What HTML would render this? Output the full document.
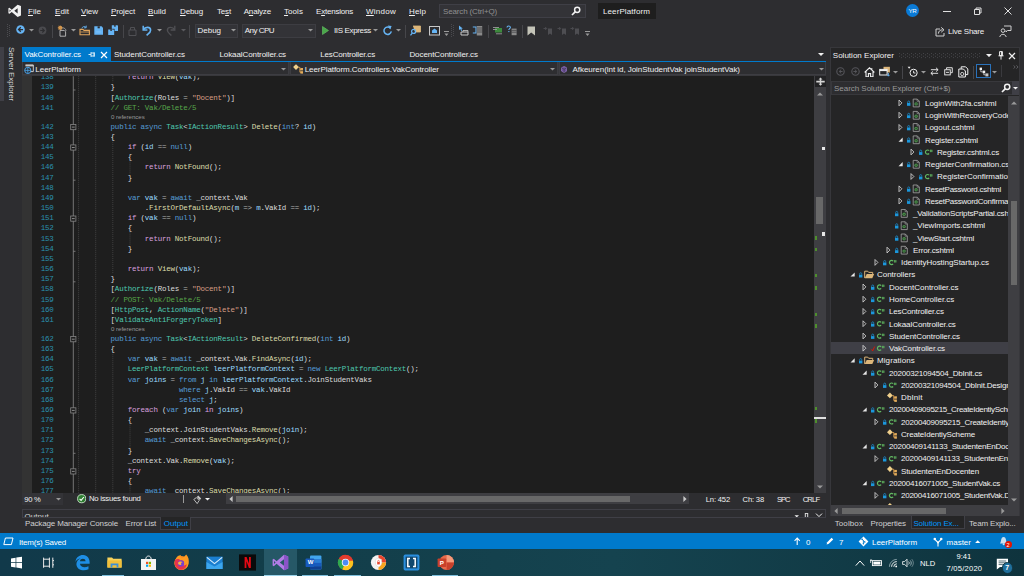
<!DOCTYPE html><html><head><meta charset="utf-8"><title>LeerPlatform - Microsoft Visual Studio</title><style>

html,body{margin:0;padding:0;background:#2d2d30;overflow:hidden}
#r{position:relative;width:1024px;height:576px;overflow:hidden;background:#2d2d30;font-family:"Liberation Sans",sans-serif}
#r div,#r span.t,#r svg,#r pre{position:absolute;display:block}
span.t{white-space:pre}
.s{font-family:"Liberation Sans",sans-serif}
.m{font-family:"Liberation Mono",monospace}


.cl{position:absolute;white-space:pre;font-family:"Liberation Mono",monospace;font-size:7.50px;letter-spacing:-0.220px;line-height:10.165px;height:10.165px;color:#dcdcdc;left:0;width:826px;overflow:hidden}
.cl i{font-style:normal}
.k{color:#569cd6}.c{color:#d8a0df}.ty{color:#4ec9b0}.me{color:#dcdcaa}.v{color:#9cdcfe}.st{color:#d69d85}.g{color:#57a64a}.o{color:#b4b4b4}
.ln{color:#2b91af}
.lens{position:absolute;white-space:pre;font-family:"Liberation Sans",sans-serif;font-size:6.1px;line-height:8.5px;color:#999999}

</style></head><body><div id="r">
<svg style="left:7.60px;top:4.40px;" width="13.6" height="13.6" viewBox="0 0 13 13"><path d="M9.2 0.6 L12.4 2 V11 L9.2 12.4 L3.6 7.6 L1.4 9.4 L0.4 8.9 V4.1 L1.4 3.6 L3.6 5.4 Z M9.2 4 L6 6.5 L9.2 9 Z M1.5 5.3 V7.7 L2.8 6.5 Z" fill="#f1f1f1" fill-rule="evenodd"/></svg>
<span class="t s" id="t0" style="left:28.00px;top:5.70px;font-size:8.0px;line-height:12px;color:#f1f1f1;letter-spacing:0.023px"><u>F</u>ile</span>
<span class="t s" id="t1" style="left:55.00px;top:5.70px;font-size:8.0px;line-height:12px;color:#f1f1f1;letter-spacing:0.051px"><u>E</u>dit</span>
<span class="t s" id="t2" style="left:81.00px;top:5.70px;font-size:8.0px;line-height:12px;color:#f1f1f1;letter-spacing:-0.055px"><u>V</u>iew</span>
<span class="t s" id="t3" style="left:111.00px;top:5.70px;font-size:8.0px;line-height:12px;color:#f1f1f1;letter-spacing:-0.129px"><u>P</u>roject</span>
<span class="t s" id="t4" style="left:148.00px;top:5.70px;font-size:8.0px;line-height:12px;color:#f1f1f1;letter-spacing:0.041px"><u>B</u>uild</span>
<span class="t s" id="t5" style="left:180.00px;top:5.70px;font-size:8.0px;line-height:12px;color:#f1f1f1;letter-spacing:-0.116px"><u>D</u>ebug</span>
<span class="t s" id="t6" style="left:217.00px;top:5.70px;font-size:8.0px;line-height:12px;color:#f1f1f1;letter-spacing:-0.172px">Te<u>s</u>t</span>
<span class="t s" id="t7" style="left:243.70px;top:5.70px;font-size:8.0px;line-height:12px;color:#f1f1f1;letter-spacing:-0.169px">A<u>n</u>alyze</span>
<span class="t s" id="t8" style="left:284.00px;top:5.70px;font-size:8.0px;line-height:12px;color:#f1f1f1;letter-spacing:0.062px"><u>T</u>ools</span>
<span class="t s" id="t9" style="left:316.00px;top:5.70px;font-size:8.0px;line-height:12px;color:#f1f1f1;letter-spacing:-0.214px">E<u>x</u>tensions</span>
<span class="t s" id="t10" style="left:366.00px;top:5.70px;font-size:8.0px;line-height:12px;color:#f1f1f1;letter-spacing:0.255px"><u>W</u>indow</span>
<span class="t s" id="t11" style="left:409.00px;top:5.70px;font-size:8.0px;line-height:12px;color:#f1f1f1;letter-spacing:0.133px"><u>H</u>elp</span>
<div style="left:439.00px;top:3.50px;width:147.00px;height:14.00px;background:#333337;box-sizing:border-box;border:1px solid #3f3f46"></div>
<span class="t s" id="t12" style="left:443.00px;top:5.60px;font-size:8.0px;line-height:12px;color:#8f8f8f;letter-spacing:-0.149px">Search (Ctrl+Q)</span>
<svg style="left:571.00px;top:6.00px;" width="10" height="10" viewBox="0 0 10 10"><circle cx="6.2" cy="3.8" r="2.6" fill="none" stroke="#f1f1f1" stroke-width="1.5"/><path d="M4.4 5.6 L1 9" stroke="#f1f1f1" stroke-width="1.7"/></svg>
<div style="left:598.00px;top:3.00px;width:58.00px;height:16.00px;background:#1e1e1e;"></div>
<span class="t s" id="t13" style="left:603.00px;top:5.50px;font-size:8.0px;line-height:12px;color:#f1f1f1;letter-spacing:0.100px">LeerPlatform</span>
<div style="left:906px;top:4px;width:13px;height:13px;border-radius:50%;background:#0a7ad6"></div>
<span class="t s" id="t14" style="left:908.40px;top:6.40px;font-size:6.2px;line-height:9px;color:#ffffff;letter-spacing:-0.205px">YR</span>
<div style="left:943.00px;top:11.00px;width:8.00px;height:1.00px;background:#e0e0e0;"></div>
<svg style="left:973.00px;top:6.00px;" width="10" height="10" viewBox="0 0 10 10"><path d="M1.5 3.5 H6.5 V8.5 H1.5 Z M3 3.5 V2 H8 V7 H6.5" fill="none" stroke="#e0e0e0" stroke-width="1"/></svg>
<svg style="left:1003.00px;top:6.00px;" width="10" height="10" viewBox="0 0 10 10"><path d="M1.5 1.5 L8.5 8.5 M8.5 1.5 L1.5 8.5" stroke="#e0e0e0" stroke-width="1"/></svg>
<svg style="left:7.40px;top:23.80px;" width="4" height="14" viewBox="0 0 4 14"><g fill="#4c4c50"><rect x="0" y="0" width="1" height="1"/><rect x="2" y="1" width="1" height="1"/><rect x="0" y="2" width="1" height="1"/><rect x="2" y="3" width="1" height="1"/><rect x="0" y="4" width="1" height="1"/><rect x="2" y="5" width="1" height="1"/><rect x="0" y="6" width="1" height="1"/><rect x="2" y="7" width="1" height="1"/><rect x="0" y="8" width="1" height="1"/><rect x="2" y="9" width="1" height="1"/><rect x="0" y="10" width="1" height="1"/><rect x="2" y="11" width="1" height="1"/><rect x="0" y="12" width="1" height="1"/></g></svg>
<svg style="left:15.70px;top:25.30px;" width="9" height="9" viewBox="0 0 9 9"><circle cx="4.5" cy="4.5" r="4.25" fill="#66b4f4"/><path d="M4.8 2.3 L2.5 4.5 L4.8 6.7 M2.7 4.5 H7" stroke="#2d2d30" stroke-width="1.25" fill="none"/></svg>
<svg style="left:28.70px;top:28.90px;" width="5.0" height="3.0" viewBox="0 0 5 3"><path d="M0 0 H5 L2.5 2.6 Z" fill="#999999"/></svg>
<svg style="left:37.70px;top:26.00px;" width="9" height="9" viewBox="0 0 9 9"><circle cx="4.5" cy="4.5" r="3.9" fill="#4a4a4e"/><path d="M4.3 2.5 L6.3 4.5 L4.3 6.5 M2.2 4.5 H6.1" stroke="#2d2d30" stroke-width="1.1" fill="none"/></svg>
<div style="left:52.30px;top:24.50px;width:1.00px;height:13.00px;background:#46464a;"></div>
<svg style="left:57.00px;top:24.50px;" width="11" height="12" viewBox="0 0 11 12"><path d="M4.6 3 C7 2.4 8.8 3.6 9 6" fill="none" stroke="#a8a8a8" stroke-width=".9"/><path d="M3 5.4 H7.2 L8.6 6.8 V11.2 H3 Z" fill="#2d2d30" stroke="#bdbdbd" stroke-width=".9"/><circle cx="3.2" cy="2.8" r="1.9" fill="#e0a050"/><circle cx="3.2" cy="2.8" r=".7" fill="#2d2d30"/><path d="M3.2 0.3 V5.3 M0.7 2.8 H5.7 M1.4 1 L5 4.6 M5 1 L1.4 4.6" stroke="#e0a050" stroke-width=".6"/></svg>
<svg style="left:70.90px;top:28.90px;" width="5.0" height="3.0" viewBox="0 0 5 3"><path d="M0 0 H5 L2.5 2.6 Z" fill="#999999"/></svg>
<svg style="left:78.50px;top:25.00px;" width="12" height="11" viewBox="0 0 12 11"><path d="M1 9.8 V4.4 H4 L5 5.4 H10.4 V9.8 Z" fill="#2d2d30" stroke="#e2a65c" stroke-width="1.1"/><path d="M1.4 7 H10" stroke="#e2a65c" stroke-width=".8"/><path d="M2.8 3.4 C3.4 1.4 5.8 1 7 2.4 M7.2 0.6 V2.8 H5" fill="none" stroke="#66b4f4" stroke-width=".9"/></svg>
<svg style="left:94.00px;top:25.80px;" width="9.4" height="9" viewBox="0 0 9.4 9"><path d="M0.3 0.3 H7.6 L9.1 1.8 V8.7 H0.3 Z" fill="#66b4f4"/><rect x="3.6" y="0.3" width="2.2" height="2" fill="#2d2d30"/><rect x="2.2" y="5.6" width="5" height="0.7" fill="#8cc8f8"/></svg>
<svg style="left:108.00px;top:25.00px;" width="10.4" height="10.4" viewBox="0 0 10.4 10.4"><path d="M3.8 0.2 H9.4 L10.2 1 V6 H3.8 Z" fill="#66b4f4"/><rect x="6" y="0.2" width="1.8" height="1.4" fill="#2d2d30"/><path d="M-0.2 3.8 H6.6 V10.6 H-0.2 Z" fill="#2d2d30"/><path d="M0.2 4.4 H5.4 L6.2 5.2 V10.2 H0.2 Z" fill="#66b4f4"/><rect x="2.2" y="4.4" width="1.8" height="1.4" fill="#2d2d30"/></svg>
<div style="left:123.10px;top:24.50px;width:1.00px;height:13.00px;background:#46464a;"></div>
<svg style="left:128.00px;top:26.00px;" width="9" height="10" viewBox="0 0 9 10"><path d="M1 4 H8 V9.5 H1 Z M2.5 4 V1.5 H6.5 V4" fill="none" stroke="#505054" stroke-width="1"/></svg>
<svg style="left:142.00px;top:25.00px;" width="10" height="11" viewBox="0 0 10 11"><path d="M1.2 0.8 V5 H5.4" fill="none" stroke="#66b4f4" stroke-width="1.5"/><path d="M1.5 4.6 C3 1.6 8.6 1.4 8.6 5.2 C8.6 7.6 6.5 8.6 4.6 10.4" fill="none" stroke="#66b4f4" stroke-width="1.6"/></svg>
<svg style="left:157.00px;top:29.20px;" width="5.0" height="3.0" viewBox="0 0 5 3"><path d="M0 0 H5 L2.5 2.6 Z" fill="#999999"/></svg>
<svg style="left:166.00px;top:25.00px;" width="10" height="11" viewBox="0 0 10 11"><path d="M8.8 0.8 V5 H4.6" fill="none" stroke="#505054" stroke-width="1.3"/><path d="M8.5 4.6 C7 1.6 1.4 1.4 1.4 5.2 C1.4 7.6 3.5 8.6 5.4 10.4" fill="none" stroke="#505054" stroke-width="1.4"/></svg>
<svg style="left:181.00px;top:29.20px;" width="5.0" height="3.0" viewBox="0 0 5 3"><path d="M0 0 H5 L2.5 2.6 Z" fill="#5a5a5e"/></svg>
<div style="left:189.00px;top:24.50px;width:1.00px;height:13.00px;background:#46464a;"></div>
<div style="left:195.00px;top:24.00px;width:43.00px;height:13.50px;background:#333337;box-sizing:border-box;border:1px solid #3d3d42"></div>
<span class="t s" id="t15" style="left:197.50px;top:24.60px;font-size:8.0px;line-height:12px;color:#f1f1f1;letter-spacing:-0.016px">Debug</span>
<svg style="left:230.50px;top:29.20px;" width="5.0" height="3.0" viewBox="0 0 5 3"><path d="M0 0 H5 L2.5 2.6 Z" fill="#999999"/></svg>
<div style="left:242.00px;top:24.00px;width:74.00px;height:13.50px;background:#333337;box-sizing:border-box;border:1px solid #3d3d42"></div>
<span class="t s" id="t16" style="left:244.70px;top:24.60px;font-size:8.0px;line-height:12px;color:#f1f1f1;letter-spacing:-0.515px">Any CPU</span>
<svg style="left:308.00px;top:29.20px;" width="5.0" height="3.0" viewBox="0 0 5 3"><path d="M0 0 H5 L2.5 2.6 Z" fill="#999999"/></svg>
<svg style="left:321.50px;top:26.00px;" width="7" height="9" viewBox="0 0 7 9"><path d="M0.5 0.5 L6.5 4.5 L0.5 8.5 Z" fill="#4aa84a" stroke="#66c266" stroke-width=".6"/></svg>
<span class="t s" id="t17" style="left:334.00px;top:24.60px;font-size:8.0px;line-height:12px;color:#f1f1f1;letter-spacing:-0.355px">IIS Express</span>
<svg style="left:373.00px;top:29.20px;" width="5.0" height="3.0" viewBox="0 0 5 3"><path d="M0 0 H5 L2.5 2.6 Z" fill="#999999"/></svg>
<svg style="left:382.00px;top:25.00px;" width="11" height="11" viewBox="0 0 11 11"><path d="M8.6 3.4 A3.7 3.7 0 1 0 9.3 6.4" fill="none" stroke="#66b4f4" stroke-width="1.5"/><path d="M5.8 0.4 L9.6 1 L8.2 4.4 Z" fill="#66b4f4"/></svg>
<svg style="left:395.50px;top:29.20px;" width="5.0" height="3.0" viewBox="0 0 5 3"><path d="M0 0 H5 L2.5 2.6 Z" fill="#999999"/></svg>
<div style="left:405.00px;top:24.50px;width:1.00px;height:13.00px;background:#46464a;"></div>
<svg style="left:409.50px;top:25.00px;" width="11" height="11" viewBox="0 0 11 11"><path d="M3 1 H10.5 V7 H5" fill="#dcb67a"/><path d="M3 1 H10.5 V7 H5.5" fill="none" stroke="#dcb67a" stroke-width=".8"/><circle cx="3.6" cy="6.4" r="2" fill="none" stroke="#66b4f4" stroke-width="1.2"/><path d="M2.4 7.8 L0.5 10.4" stroke="#66b4f4" stroke-width="1.3"/></svg>
<svg style="left:428.50px;top:25.50px;" width="11" height="10" viewBox="0 0 11 10"><rect x="0.5" y="0.5" width="10" height="8.5" fill="none" stroke="#c8c8c8" stroke-width="1"/><path d="M3 7 V4.6 L5.5 2.6 L8 4.6 V7 Z" fill="#66b4f4"/></svg>
<svg style="left:443.50px;top:31.00px;" width="5" height="6" viewBox="0 0 5 6"><rect x="0" y="0" width="5" height="1" fill="#999"/><path d="M0.5 2.5 H4.5 L2.5 5 Z" fill="#999"/></svg>
<svg style="left:451.00px;top:24.00px;" width="4" height="14" viewBox="0 0 4 14"><g fill="#4a4a4e"><rect x="0" y="0" width="1" height="1"/><rect x="2" y="1" width="1" height="1"/><rect x="0" y="2" width="1" height="1"/><rect x="2" y="3" width="1" height="1"/><rect x="0" y="4" width="1" height="1"/><rect x="2" y="5" width="1" height="1"/><rect x="0" y="6" width="1" height="1"/><rect x="2" y="7" width="1" height="1"/><rect x="0" y="8" width="1" height="1"/><rect x="2" y="9" width="1" height="1"/><rect x="0" y="10" width="1" height="1"/><rect x="2" y="11" width="1" height="1"/><rect x="0" y="12" width="1" height="1"/></g></svg>
<svg style="left:457.50px;top:25.00px;" width="11" height="11" viewBox="0 0 11 11"><path d="M1 0.5 L1 5 L2.3 4 L3.2 6 L4.2 5.5 L3.3 3.7 L4.8 3.5 Z" fill="#66b4f4"/><path d="M3 7 H10 V10 H3 Z" fill="none" stroke="#c8c8c8" stroke-width="1"/><path d="M5 7 V5.5 H10 V7" fill="none" stroke="#c8c8c8" stroke-width=".8"/></svg>
<svg style="left:471.50px;top:25.00px;" width="11" height="11" viewBox="0 0 11 11"><path d="M0.8 2 H4 V8 H0.8" fill="none" stroke="#66b4f4" stroke-width="1.1"/><rect x="4.8" y="1" width="5.4" height="9.5" fill="#8a8a8a"/><path d="M4.8 3 H10.2 M4.8 5 H10.2 M4.8 7 H10.2" stroke="#2d2d30" stroke-width=".6"/></svg>
<div style="left:488.00px;top:24.50px;width:1.00px;height:13.00px;background:#46464a;"></div>
<svg style="left:492.50px;top:26.50px;" width="10" height="8" viewBox="0 0 10 8"><rect x="2" y="1" width="7" height="4.5" fill="#3d8a3d"/><path d="M0 0.5 H6 M0 2.5 H4 M3 6.8 H9" stroke="#9a9a9a" stroke-width=".9"/></svg>
<svg style="left:506.00px;top:25.00px;" width="11" height="11" viewBox="0 0 11 11"><path d="M1 2.6 C1 0.6 4.4 0.6 4.4 2.4 C4.4 3.6 2.8 3.6 2.8 5" fill="none" stroke="#66b4f4" stroke-width="1.1"/><rect x="2.3" y="6" width="1.1" height="1.1" fill="#66b4f4"/><rect x="5.6" y="3.6" width="5" height="6.6" fill="#8a8a8a"/><path d="M5.6 5.4 H10.6 M5.6 7.2 H10.6" stroke="#2d2d30" stroke-width=".6"/></svg>
<div style="left:522.00px;top:24.50px;width:1.00px;height:13.00px;background:#46464a;"></div>
<svg style="left:527.00px;top:25.50px;" width="9" height="10" viewBox="0 0 9 10"><path d="M0.5 0.5 H8 V9.5 L4.2 6.6 L0.5 9.5 Z" fill="#c4c4b8"/></svg>
<svg style="left:543.00px;top:25.50px;" width="10" height="10" viewBox="0 0 10 10"><path d="M5 2.5 H9 V9 L7 7.6 L5 9 Z" fill="#4e4e52"/><path d="M0.5 2.5 H3.5 M2.2 1 L3.7 2.5 L2.2 4" stroke="#4e4e52" stroke-width=".9" fill="none"/></svg>
<svg style="left:556.50px;top:25.50px;" width="10" height="10" viewBox="0 0 10 10"><path d="M5 2.5 H9 V9 L7 7.6 L5 9 Z" fill="#4e4e52"/><path d="M0.5 2.5 H3.5 M2.2 1 L3.7 2.5 L2.2 4" stroke="#4e4e52" stroke-width=".9" fill="none"/></svg>
<svg style="left:570.00px;top:25.50px;" width="10" height="10" viewBox="0 0 10 10"><path d="M5 2.5 H9 V9 L7 7.6 L5 9 Z" fill="#4e4e52"/><path d="M0.5 2.5 H3.5 M2.2 1 L3.7 2.5 L2.2 4" stroke="#4e4e52" stroke-width=".9" fill="none"/></svg>
<svg style="left:584.50px;top:31.00px;" width="5" height="6" viewBox="0 0 5 6"><rect x="0" y="0" width="5" height="1" fill="#999"/><path d="M0.5 2.5 H4.5 L2.5 5 Z" fill="#999"/></svg>
<svg style="left:934.50px;top:26.00px;" width="11" height="11" viewBox="0 0 11 11"><path d="M5 3 H1 V10 H9 V7" fill="none" stroke="#d0d0d0" stroke-width="1"/><path d="M3.4 7.6 C3.6 5 5.2 3.8 7.6 3.8 M6.2 1.4 L9 3.8 L6.2 6.2" fill="none" stroke="#d0d0d0" stroke-width="1"/></svg>
<span class="t s" id="t18" style="left:948.00px;top:26.20px;font-size:8.0px;line-height:12px;color:#f1f1f1;letter-spacing:-0.225px">Live Share</span>
<svg style="left:998.50px;top:24.50px;" width="13" height="13" viewBox="0 0 13 13"><path d="M5 1 H12 V5.5 H8.5 L7 7 V5.5" fill="none" stroke="#d0d0d0" stroke-width="1"/><circle cx="4" cy="5.6" r="1.8" fill="none" stroke="#d0d0d0" stroke-width="1"/><path d="M0.8 12 C1.4 8.4 6.4 8.4 7.2 12" fill="none" stroke="#d0d0d0" stroke-width="1"/></svg>
<div style="left:0.00px;top:46.80px;width:4.20px;height:54.00px;background:#3f3f46;"></div>
<span class="t s" style="left:15.8px;top:46.6px;font-size:8px;line-height:10px;color:#d0d0d0;transform-origin:0 0;transform:rotate(90deg);letter-spacing:-0.1px">Server Explorer</span>
<div style="left:22.00px;top:46.80px;width:89.20px;height:14.50px;background:#007acc;"></div>
<div style="left:22.00px;top:60.60px;width:804.00px;height:1.50px;background:#007acc;"></div>
<span class="t s" id="t19" style="left:24.50px;top:49.40px;font-size:8.0px;line-height:12px;color:#ffffff;letter-spacing:-0.072px">VakController.cs</span>
<svg style="left:87.50px;top:51.00px;" width="8" height="7" viewBox="0 0 8 7"><path d="M0.5 3.5 H3 M3 1.2 V5.8 M3 2 H6.2 V5 H3 M6.2 1.2 V5.8" fill="none" stroke="#d6ebf8" stroke-width="1"/></svg>
<svg style="left:100.00px;top:50.50px;" width="8" height="8" viewBox="0 0 8 8"><path d="M1 1 L7 7 M7 1 L1 7" stroke="#ffffff" stroke-width="1.2"/></svg>
<span class="t s" id="t20" style="left:114.00px;top:49.40px;font-size:8.0px;line-height:12px;color:#f1f1f1;letter-spacing:-0.052px">StudentController.cs</span>
<span class="t s" id="t21" style="left:219.40px;top:49.40px;font-size:8.0px;line-height:12px;color:#f1f1f1;letter-spacing:-0.076px">LokaalController.cs</span>
<span class="t s" id="t22" style="left:320.30px;top:49.40px;font-size:8.0px;line-height:12px;color:#f1f1f1;letter-spacing:-0.166px">LesController.cs</span>
<span class="t s" id="t23" style="left:409.40px;top:49.40px;font-size:8.0px;line-height:12px;color:#f1f1f1;letter-spacing:-0.064px">DocentController.cs</span>
<svg style="left:818.00px;top:53.44px;" width="6.0" height="3.5999999999999996" viewBox="0 0 5 3"><path d="M0 0 H5 L2.5 2.6 Z" fill="#f1f1f1"/></svg>
<div style="left:22.00px;top:62.10px;width:804.00px;height:14.10px;background:#38383c;"></div>
<div style="left:22.30px;top:62.10px;width:267.00px;height:13.30px;background:#2e2e31;box-sizing:border-box;border:1px solid #3d3d42;border-top:none"></div>
<div style="left:290.00px;top:62.10px;width:268.30px;height:13.30px;background:#2e2e31;box-sizing:border-box;border:1px solid #3d3d42;border-top:none"></div>
<div style="left:559.00px;top:62.10px;width:266.70px;height:13.30px;background:#2e2e31;box-sizing:border-box;border:1px solid #3d3d42;border-top:none"></div>
<svg style="left:24.00px;top:64.00px;" width="10" height="10" viewBox="0 0 10 10"><path d="M1.5 1 H9.3 V7.6 H6.8" fill="none" stroke="#c8c8c8" stroke-width="1"/><path d="M1.5 1.6 H9.3" stroke="#c8c8c8" stroke-width="1.6"/><circle cx="3.8" cy="6.4" r="3.1" fill="#2d2d30" stroke="#4aa3e8" stroke-width="1"/><path d="M0.8 6.4 H6.8 M3.8 3.4 V9.4" stroke="#4aa3e8" stroke-width=".8"/></svg>
<span class="t s" id="t24" style="left:35.30px;top:64.10px;font-size:8.0px;line-height:12px;color:#f1f1f1;letter-spacing:-0.008px">LeerPlatform</span>
<svg style="left:281.00px;top:68.00px;" width="5.0" height="3.0" viewBox="0 0 5 3"><path d="M0 0 H5 L2.5 2.6 Z" fill="#999999"/></svg>
<svg style="left:293.20px;top:64.20px;" width="11" height="11" viewBox="0 0 11 11"><path d="M3 0.2 L5.9 3.1 L3 6 L0.1 3.1 Z" fill="#f0d08c"/><path d="M5.4 3.4 H6.9 V8.2 H8 M6.9 5.4 H8" fill="none" stroke="#dca04e" stroke-width=".9"/><rect x="7.4" y="4" width="2.6" height="2.4" fill="#e4ac5a"/><rect x="7.4" y="7.2" width="2.6" height="2.4" fill="#e4ac5a"/></svg>
<span class="t s" id="t25" style="left:304.70px;top:64.10px;font-size:8.0px;line-height:12px;color:#f1f1f1;letter-spacing:-0.066px">LeerPlatform.Controllers.VakController</span>
<svg style="left:549.50px;top:68.00px;" width="5.0" height="3.0" viewBox="0 0 5 3"><path d="M0 0 H5 L2.5 2.6 Z" fill="#999999"/></svg>
<svg style="left:561.20px;top:65.60px;" width="6.2" height="7" viewBox="0 0 7 8"><path d="M3.5 0.5 L6.5 2 V5.8 L3.5 7.5 L0.5 5.8 V2 Z" fill="#6f539c" stroke="#a07fd0" stroke-width=".7"/><path d="M0.8 2.2 L3.5 3.6 L6.2 2.2 M3.5 3.6 V7.2" stroke="#2d2d30" stroke-width=".6" fill="none"/></svg>
<span class="t s" id="t26" style="left:572.50px;top:64.10px;font-size:8.0px;line-height:12px;color:#f1f1f1;letter-spacing:-0.045px">Afkeuren(int id, JoinStudentVak joinStudentVak)</span>
<svg style="left:818.50px;top:68.00px;" width="5.0" height="3.0" viewBox="0 0 5 3"><path d="M0 0 H5 L2.5 2.6 Z" fill="#999999"/></svg>
<div style="left:22.00px;top:76.20px;width:804.00px;height:416.60px;background:#1e1e1e;"></div>
<div style="left:22.00px;top:76.20px;width:10.00px;height:416.60px;background:#333333;"></div>
<div style="left:0;top:76.2px;width:826px;height:416.6px;overflow:hidden"><span class="cl" style="top:-3.90px"><i class="ln" style="position:absolute;left:40.7px">138</i><i style="position:absolute;left:127.71px"><i class="c">return</i> <i class="me">View</i>(<i class="v">vak</i>);</i></span><span class="cl" style="top:6.27px"><i class="ln" style="position:absolute;left:40.7px">139</i><i style="position:absolute;left:110.59px">}</i></span><span class="cl" style="top:16.43px"><i class="ln" style="position:absolute;left:40.7px">140</i><i style="position:absolute;left:110.59px">[<i class="ty">Authorize</i>(Roles <i class="o">=</i> <i class="st">&quot;Docent&quot;</i>)]</i></span><span class="cl" style="top:26.59px"><i class="ln" style="position:absolute;left:40.7px">141</i><i style="position:absolute;left:110.59px"><i class="g">// GET: Vak/Delete/5</i></i></span><span class="lens" style="left:110.89px;top:36.76px">0 references</span><span class="cl" style="top:45.56px"><i class="ln" style="position:absolute;left:40.7px">142</i><i style="position:absolute;left:110.59px"><i class="k">public</i> <i class="k">async</i> <i class="ty">Task</i>&lt;<i class="ty">IActionResult</i>&gt; <i class="me">Delete</i>(<i class="k">int</i>? <i class="v">id</i>)</i></span><span class="cl" style="top:55.72px"><i class="ln" style="position:absolute;left:40.7px">143</i><i style="position:absolute;left:110.59px">{</i></span><span class="cl" style="top:65.89px"><i class="ln" style="position:absolute;left:40.7px">144</i><i style="position:absolute;left:127.71px"><i class="c">if</i> (<i class="v">id</i> <i class="o">==</i> <i class="k">null</i>)</i></span><span class="cl" style="top:76.05px"><i class="ln" style="position:absolute;left:40.7px">145</i><i style="position:absolute;left:127.71px">{</i></span><span class="cl" style="top:86.22px"><i class="ln" style="position:absolute;left:40.7px">146</i><i style="position:absolute;left:144.83px"><i class="c">return</i> <i class="me">NotFound</i>();</i></span><span class="cl" style="top:96.38px"><i class="ln" style="position:absolute;left:40.7px">147</i><i style="position:absolute;left:127.71px">}</i></span><span class="cl" style="top:106.55px"><i class="ln" style="position:absolute;left:40.7px">148</i><i style="position:absolute;left:76.35px"></i></span><span class="cl" style="top:116.71px"><i class="ln" style="position:absolute;left:40.7px">149</i><i style="position:absolute;left:127.71px"><i class="k">var</i> <i class="v">vak</i> <i class="o">=</i> <i class="k">await</i> _context.Vak</i></span><span class="cl" style="top:126.88px"><i class="ln" style="position:absolute;left:40.7px">150</i><i style="position:absolute;left:144.83px">.<i class="me">FirstOrDefaultAsync</i>(<i class="v">m</i> <i class="o">=&gt;</i> <i class="v">m</i>.VakId <i class="o">==</i> <i class="v">id</i>);</i></span><span class="cl" style="top:137.04px"><i class="ln" style="position:absolute;left:40.7px">151</i><i style="position:absolute;left:127.71px"><i class="c">if</i> (<i class="v">vak</i> <i class="o">==</i> <i class="k">null</i>)</i></span><span class="cl" style="top:147.21px"><i class="ln" style="position:absolute;left:40.7px">152</i><i style="position:absolute;left:127.71px">{</i></span><span class="cl" style="top:157.37px"><i class="ln" style="position:absolute;left:40.7px">153</i><i style="position:absolute;left:144.83px"><i class="c">return</i> <i class="me">NotFound</i>();</i></span><span class="cl" style="top:167.54px"><i class="ln" style="position:absolute;left:40.7px">154</i><i style="position:absolute;left:127.71px">}</i></span><span class="cl" style="top:177.70px"><i class="ln" style="position:absolute;left:40.7px">155</i><i style="position:absolute;left:76.35px"></i></span><span class="cl" style="top:187.87px"><i class="ln" style="position:absolute;left:40.7px">156</i><i style="position:absolute;left:127.71px"><i class="c">return</i> <i class="me">View</i>(<i class="v">vak</i>);</i></span><span class="cl" style="top:198.03px"><i class="ln" style="position:absolute;left:40.7px">157</i><i style="position:absolute;left:110.59px">}</i></span><span class="cl" style="top:208.20px"><i class="ln" style="position:absolute;left:40.7px">158</i><i style="position:absolute;left:110.59px">[<i class="ty">Authorize</i>(Roles <i class="o">=</i> <i class="st">&quot;Docent&quot;</i>)]</i></span><span class="cl" style="top:218.36px"><i class="ln" style="position:absolute;left:40.7px">159</i><i style="position:absolute;left:110.59px"><i class="g">// POST: Vak/Delete/5</i></i></span><span class="cl" style="top:228.53px"><i class="ln" style="position:absolute;left:40.7px">160</i><i style="position:absolute;left:110.59px">[<i class="ty">HttpPost</i>, <i class="ty">ActionName</i>(<i class="st">&quot;Delete&quot;</i>)]</i></span><span class="cl" style="top:238.69px"><i class="ln" style="position:absolute;left:40.7px">161</i><i style="position:absolute;left:110.59px">[<i class="ty">ValidateAntiForgeryToken</i>]</i></span><span class="lens" style="left:110.89px;top:248.86px">0 references</span><span class="cl" style="top:257.66px"><i class="ln" style="position:absolute;left:40.7px">162</i><i style="position:absolute;left:110.59px"><i class="k">public</i> <i class="k">async</i> <i class="ty">Task</i>&lt;<i class="ty">IActionResult</i>&gt; <i class="me">DeleteConfirmed</i>(<i class="k">int</i> <i class="v">id</i>)</i></span><span class="cl" style="top:267.83px"><i class="ln" style="position:absolute;left:40.7px">163</i><i style="position:absolute;left:110.59px">{</i></span><span class="cl" style="top:277.99px"><i class="ln" style="position:absolute;left:40.7px">164</i><i style="position:absolute;left:127.71px"><i class="k">var</i> <i class="v">vak</i> <i class="o">=</i> <i class="k">await</i> _context.Vak.<i class="me">FindAsync</i>(<i class="v">id</i>);</i></span><span class="cl" style="top:288.16px"><i class="ln" style="position:absolute;left:40.7px">165</i><i style="position:absolute;left:127.71px"><i class="ty">LeerPlatformContext</i> <i class="v">leerPlatformContext</i> <i class="o">=</i> <i class="k">new</i> <i class="ty">LeerPlatformContext</i>();</i></span><span class="cl" style="top:298.32px"><i class="ln" style="position:absolute;left:40.7px">166</i><i style="position:absolute;left:127.71px"><i class="k">var</i> <i class="v">joins</i> <i class="o">=</i> <i class="k">from</i> <i class="v">j</i> <i class="k">in</i> <i class="v">leerPlatformContext</i>.JoinStudentVaks</i></span><span class="cl" style="top:308.49px"><i class="ln" style="position:absolute;left:40.7px">167</i><i style="position:absolute;left:179.07px"><i class="k">where</i> <i class="v">j</i>.VakId <i class="o">==</i> <i class="v">vak</i>.VakId</i></span><span class="cl" style="top:318.65px"><i class="ln" style="position:absolute;left:40.7px">168</i><i style="position:absolute;left:179.07px"><i class="k">select</i> <i class="v">j</i>;</i></span><span class="cl" style="top:328.82px"><i class="ln" style="position:absolute;left:40.7px">169</i><i style="position:absolute;left:127.71px"><i class="c">foreach</i> (<i class="k">var</i> <i class="v">join</i> <i class="c">in</i> <i class="v">joins</i>)</i></span><span class="cl" style="top:338.98px"><i class="ln" style="position:absolute;left:40.7px">170</i><i style="position:absolute;left:127.71px">{</i></span><span class="cl" style="top:349.15px"><i class="ln" style="position:absolute;left:40.7px">171</i><i style="position:absolute;left:144.83px">_context.JoinStudentVaks.<i class="me">Remove</i>(<i class="v">join</i>);</i></span><span class="cl" style="top:359.31px"><i class="ln" style="position:absolute;left:40.7px">172</i><i style="position:absolute;left:144.83px"><i class="k">await</i> _context.<i class="me">SaveChangesAsync</i>();</i></span><span class="cl" style="top:369.48px"><i class="ln" style="position:absolute;left:40.7px">173</i><i style="position:absolute;left:127.71px">}</i></span><span class="cl" style="top:379.64px"><i class="ln" style="position:absolute;left:40.7px">174</i><i style="position:absolute;left:127.71px">_context.Vak.<i class="me">Remove</i>(<i class="v">vak</i>);</i></span><span class="cl" style="top:389.81px"><i class="ln" style="position:absolute;left:40.7px">175</i><i style="position:absolute;left:127.71px"><i class="c">try</i></i></span><span class="cl" style="top:399.97px"><i class="ln" style="position:absolute;left:40.7px">176</i><i style="position:absolute;left:127.71px">{</i></span><span class="cl" style="top:410.14px"><i class="ln" style="position:absolute;left:40.7px">177</i><i style="position:absolute;left:144.83px"><i class="k">await</i> _context.<i class="me">SaveChangesAsync</i>();</i></span></div>
<svg style="left:0;top:0" width="826" height="492.8" viewBox="0 0 826 492.8"><line x1="78.6" y1="76.2" x2="78.6" y2="492.8" stroke="#5a5a5a" stroke-width="0.6" stroke-dasharray="1 1"/><line x1="95.7" y1="76.2" x2="95.7" y2="492.8" stroke="#5a5a5a" stroke-width="0.6" stroke-dasharray="1 1"/><line x1="112.8" y1="76.2" x2="112.8" y2="82.5" stroke="#5a5a5a" stroke-width="0.6" stroke-dasharray="1 1"/><line x1="112.8" y1="142.1" x2="112.8" y2="274.2" stroke="#5a5a5a" stroke-width="0.6" stroke-dasharray="1 1"/><line x1="112.8" y1="354.2" x2="112.8" y2="492.8" stroke="#5a5a5a" stroke-width="0.6" stroke-dasharray="1 1"/><line x1="130.0" y1="160.4" x2="130.0" y2="174.6" stroke="#5a5a5a" stroke-width="0.6" stroke-dasharray="1 1"/><line x1="130.0" y1="231.6" x2="130.0" y2="245.7" stroke="#5a5a5a" stroke-width="0.6" stroke-dasharray="1 1"/><line x1="130.0" y1="423.3" x2="130.0" y2="447.7" stroke="#5a5a5a" stroke-width="0.6" stroke-dasharray="1 1"/><line x1="130.0" y1="484.3" x2="130.0" y2="492.8" stroke="#5a5a5a" stroke-width="0.6" stroke-dasharray="1 1"/><line x1="73.3" y1="76.2" x2="73.3" y2="492.8" stroke="#8a8a8a" stroke-width="0.8"/><line x1="73.3" y1="90.0" x2="75.5" y2="90.0" stroke="#8a8a8a" stroke-width="0.8"/><line x1="73.3" y1="180.2" x2="75.5" y2="180.2" stroke="#8a8a8a" stroke-width="0.8"/><line x1="73.3" y1="251.3" x2="75.5" y2="251.3" stroke="#8a8a8a" stroke-width="0.8"/><line x1="73.3" y1="281.8" x2="75.5" y2="281.8" stroke="#8a8a8a" stroke-width="0.8"/><line x1="73.3" y1="453.3" x2="75.5" y2="453.3" stroke="#8a8a8a" stroke-width="0.8"/><rect x="70.7" y="124.5" width="5.2" height="5.2" fill="#1e1e1e" stroke="#868686" stroke-width="0.8"/><line x1="71.9" y1="127.1" x2="74.7" y2="127.1" stroke="#a8a8a8" stroke-width="0.8"/><rect x="70.7" y="144.9" width="5.2" height="5.2" fill="#1e1e1e" stroke="#868686" stroke-width="0.8"/><line x1="71.9" y1="147.5" x2="74.7" y2="147.5" stroke="#a8a8a8" stroke-width="0.8"/><rect x="70.7" y="216.0" width="5.2" height="5.2" fill="#1e1e1e" stroke="#868686" stroke-width="0.8"/><line x1="71.9" y1="218.6" x2="74.7" y2="218.6" stroke="#a8a8a8" stroke-width="0.8"/><rect x="70.7" y="336.6" width="5.2" height="5.2" fill="#1e1e1e" stroke="#868686" stroke-width="0.8"/><line x1="71.9" y1="339.2" x2="74.7" y2="339.2" stroke="#a8a8a8" stroke-width="0.8"/><rect x="70.7" y="407.8" width="5.2" height="5.2" fill="#1e1e1e" stroke="#868686" stroke-width="0.8"/><line x1="71.9" y1="410.4" x2="74.7" y2="410.4" stroke="#a8a8a8" stroke-width="0.8"/><rect x="70.7" y="468.8" width="5.2" height="5.2" fill="#1e1e1e" stroke="#868686" stroke-width="0.8"/><line x1="71.9" y1="471.4" x2="74.7" y2="471.4" stroke="#a8a8a8" stroke-width="0.8"/></svg>
<div style="left:813.60px;top:76.20px;width:12.40px;height:416.60px;background:#3e3e42;"></div>
<div style="left:813.60px;top:76.20px;width:12.40px;height:12.50px;background:#3e3e42;"></div>
<div style="left:814.60px;top:76.20px;width:11.40px;height:10.80px;background:#222224;"></div>
<svg style="left:815.90px;top:77.00px;" width="9" height="9.4" viewBox="0 0 10 10"><path d="M5 0.3 L7.2 2.6 H5.8 V4 H9.7 V5.8 H5.8 V7.2 H7.2 L5 9.6 L2.8 7.2 H4.2 V5.8 H0.3 V4 H4.2 V2.6 H2.8 Z" fill="#d4d4d4"/></svg>
<svg style="left:817.30px;top:91.50px;" width="6" height="4" viewBox="0 0 6 4"><path d="M0 3.6 L3 0.4 L6 3.6 Z" fill="#999999"/></svg>
<svg style="left:817.30px;top:485.00px;" width="6" height="4" viewBox="0 0 6 4"><path d="M0 0.4 L3 3.6 L6 0.4 Z" fill="#999999"/></svg>
<div style="left:815.80px;top:196.50px;width:7.20px;height:27.30px;background:#686868;"></div>
<div style="left:822.00px;top:146.50px;width:3.40px;height:3.60px;background:#e8e8e8;"></div>
<div style="left:822.00px;top:232.00px;width:3.40px;height:3.60px;background:#e8e8e8;"></div>
<div style="left:814.60px;top:236.00px;width:2.80px;height:3.60px;background:#4e8f2c;"></div>
<div style="left:814.60px;top:247.50px;width:2.80px;height:3.60px;background:#4e8f2c;"></div>
<div style="left:814.60px;top:273.50px;width:2.80px;height:3.60px;background:#4e8f2c;"></div>
<div style="left:814.60px;top:286.00px;width:2.80px;height:3.60px;background:#4e8f2c;"></div>
<div style="left:814.60px;top:312.50px;width:2.80px;height:3.60px;background:#4e8f2c;"></div>
<div style="left:814.60px;top:324.00px;width:2.80px;height:3.60px;background:#4e8f2c;"></div>
<div style="left:814.60px;top:406.50px;width:2.80px;height:3.60px;background:#4e8f2c;"></div>
<div style="left:814.60px;top:419.00px;width:2.80px;height:3.60px;background:#4e8f2c;"></div>
<div style="left:813.60px;top:417.40px;width:12.40px;height:1.20px;background:#e0e0e0;"></div>
<div style="left:22.00px;top:492.80px;width:804.00px;height:12.00px;background:#2d2d30;"></div>
<div style="left:22.00px;top:493.00px;width:40.50px;height:11.60px;background:#333337;"></div>
<span class="t s" id="t27" style="left:24.30px;top:493.60px;font-size:7.6px;line-height:11px;color:#f1f1f1;letter-spacing:-0.278px">90 %</span>
<svg style="left:55.50px;top:497.90px;" width="5.0" height="3.0" viewBox="0 0 5 3"><path d="M0 0 H5 L2.5 2.6 Z" fill="#999999"/></svg>
<svg style="left:76.50px;top:494.30px;" width="9.4" height="9.4" viewBox="0 0 9.4 9.4"><circle cx="4.7" cy="4.7" r="4.1" fill="#2e7d32" stroke="#cfe8cf" stroke-width="0.9"/><path d="M2.6 4.8 L4.1 6.4 L6.9 3" fill="none" stroke="#ffffff" stroke-width="1.1"/></svg>
<span class="t s" id="t28" style="left:89.00px;top:493.10px;font-size:7.76px;line-height:12px;color:#f1f1f1;letter-spacing:-0.272px">No issues found</span>
<div style="left:183.10px;top:494.60px;width:0.70px;height:8.80px;background:#9a9a9a;"></div>
<svg style="left:192.50px;top:494.50px;" width="9" height="9" viewBox="0 0 9 9"><path d="M5.2 0.6 L8.2 3.6 L6.8 5 L3.8 2 Z" fill="#c8c8c8"/><path d="M3.4 2.6 L6.2 5.4 L4.2 8.6 L0.8 4.4 Z" fill="none" stroke="#c8c8c8" stroke-width=".9"/></svg>
<svg style="left:204.50px;top:497.90px;" width="5.0" height="3.0" viewBox="0 0 5 3"><path d="M0 0 H5 L2.5 2.6 Z" fill="#f1f1f1"/></svg>
<div style="left:226.00px;top:493.40px;width:463.00px;height:10.60px;background:#3e3e42;"></div>
<svg style="left:229.00px;top:496.00px;" width="4" height="6" viewBox="0 0 4 6"><path d="M3.6 0 L0.4 3 L3.6 6 Z" fill="#c8c8c8"/></svg>
<div style="left:236.00px;top:495.70px;width:394.00px;height:6.40px;background:#686868;"></div>
<svg style="left:683.00px;top:496.00px;" width="4" height="6" viewBox="0 0 4 6"><path d="M0.4 0 L3.6 3 L0.4 6 Z" fill="#c8c8c8"/></svg>
<span class="t s" id="t29" style="left:705.80px;top:493.60px;font-size:7.6px;line-height:11px;color:#f1f1f1;letter-spacing:-0.163px">Ln: 452</span>
<span class="t s" id="t30" style="left:742.60px;top:493.60px;font-size:7.6px;line-height:11px;color:#f1f1f1;letter-spacing:-0.163px">Ch: 38</span>
<span class="t s" id="t31" style="left:777.00px;top:493.60px;font-size:7.6px;line-height:11px;color:#f1f1f1;letter-spacing:-1.042px">SPC</span>
<span class="t s" id="t32" style="left:802.70px;top:493.60px;font-size:7.6px;line-height:11px;color:#f1f1f1;letter-spacing:-0.811px">CRLF</span>
<div style="left:22.00px;top:508.80px;width:804.00px;height:8.00px;background:#2d2d30;box-sizing:border-box;border-top:1px solid #3f3f46;border-left:1px solid #3f3f46;border-right:1px solid #3f3f46"></div>
<div style="left:22px;top:509.5px;width:200px;height:7.2px;overflow:hidden;background:transparent"><span class="t s" style="left:2.6px;top:1.0px;font-size:8px;line-height:12px;color:#d0d0d0">Output</span></div>
<svg style="left:793.50px;top:513.00px;" width="30" height="4" viewBox="0 0 30 4"><path d="M0.5 2.2 H5 L2.75 4.4 Z" fill="#f1f1f1"/><path d="M11.3 0 V4 M13.7 0 V4 M11.3 0.4 H13.7" stroke="#f1f1f1" stroke-width=".9" fill="none"/><path d="M22 0.6 L25 3.6 M28 0.6 L25 3.6" stroke="#f1f1f1" stroke-width="1" fill="none"/></svg>
<div style="left:22.00px;top:516.60px;width:804.00px;height:0.80px;background:#3f3f46;"></div>
<div style="left:160.00px;top:516.60px;width:31.30px;height:13.00px;background:#252526;box-sizing:border-box;border:1px solid #3f3f46;border-top:none"></div>
<span class="t s" id="t33" style="left:25.00px;top:517.70px;font-size:8.0px;line-height:12px;color:#d0d0d0;letter-spacing:-0.153px">Package Manager Console</span>
<span class="t s" id="t34" style="left:125.60px;top:517.70px;font-size:8.0px;line-height:12px;color:#d0d0d0;letter-spacing:-0.205px">Error List</span>
<span class="t s" id="t35" style="left:163.70px;top:517.70px;font-size:8.0px;line-height:12px;color:#0097fb;letter-spacing:0.047px">Output</span>
<div style="left:830.40px;top:47.30px;width:189.20px;height:470.00px;background:#252526;box-sizing:border-box;border:1px solid #37373b"></div>
<span class="t s" id="t36" style="left:832.80px;top:49.60px;font-size:8.0px;line-height:12px;color:#f1f1f1;letter-spacing:0.016px">Solution Explorer</span>
<svg style="left:899.00px;top:52.60px;" width="82" height="6" viewBox="0 0 82 6"><rect x="0" y="0.0" width="0.9" height="0.9" fill="#4d4d52"/><rect x="0" y="2.8" width="0.9" height="0.9" fill="#4d4d52"/><rect x="2" y="1.4" width="0.9" height="0.9" fill="#4d4d52"/><rect x="2" y="4.2" width="0.9" height="0.9" fill="#4d4d52"/><rect x="4" y="0.0" width="0.9" height="0.9" fill="#4d4d52"/><rect x="4" y="2.8" width="0.9" height="0.9" fill="#4d4d52"/><rect x="6" y="1.4" width="0.9" height="0.9" fill="#4d4d52"/><rect x="6" y="4.2" width="0.9" height="0.9" fill="#4d4d52"/><rect x="8" y="0.0" width="0.9" height="0.9" fill="#4d4d52"/><rect x="8" y="2.8" width="0.9" height="0.9" fill="#4d4d52"/><rect x="10" y="1.4" width="0.9" height="0.9" fill="#4d4d52"/><rect x="10" y="4.2" width="0.9" height="0.9" fill="#4d4d52"/><rect x="12" y="0.0" width="0.9" height="0.9" fill="#4d4d52"/><rect x="12" y="2.8" width="0.9" height="0.9" fill="#4d4d52"/><rect x="14" y="1.4" width="0.9" height="0.9" fill="#4d4d52"/><rect x="14" y="4.2" width="0.9" height="0.9" fill="#4d4d52"/><rect x="16" y="0.0" width="0.9" height="0.9" fill="#4d4d52"/><rect x="16" y="2.8" width="0.9" height="0.9" fill="#4d4d52"/><rect x="18" y="1.4" width="0.9" height="0.9" fill="#4d4d52"/><rect x="18" y="4.2" width="0.9" height="0.9" fill="#4d4d52"/><rect x="20" y="0.0" width="0.9" height="0.9" fill="#4d4d52"/><rect x="20" y="2.8" width="0.9" height="0.9" fill="#4d4d52"/><rect x="22" y="1.4" width="0.9" height="0.9" fill="#4d4d52"/><rect x="22" y="4.2" width="0.9" height="0.9" fill="#4d4d52"/><rect x="24" y="0.0" width="0.9" height="0.9" fill="#4d4d52"/><rect x="24" y="2.8" width="0.9" height="0.9" fill="#4d4d52"/><rect x="26" y="1.4" width="0.9" height="0.9" fill="#4d4d52"/><rect x="26" y="4.2" width="0.9" height="0.9" fill="#4d4d52"/><rect x="28" y="0.0" width="0.9" height="0.9" fill="#4d4d52"/><rect x="28" y="2.8" width="0.9" height="0.9" fill="#4d4d52"/><rect x="30" y="1.4" width="0.9" height="0.9" fill="#4d4d52"/><rect x="30" y="4.2" width="0.9" height="0.9" fill="#4d4d52"/><rect x="32" y="0.0" width="0.9" height="0.9" fill="#4d4d52"/><rect x="32" y="2.8" width="0.9" height="0.9" fill="#4d4d52"/><rect x="34" y="1.4" width="0.9" height="0.9" fill="#4d4d52"/><rect x="34" y="4.2" width="0.9" height="0.9" fill="#4d4d52"/><rect x="36" y="0.0" width="0.9" height="0.9" fill="#4d4d52"/><rect x="36" y="2.8" width="0.9" height="0.9" fill="#4d4d52"/><rect x="38" y="1.4" width="0.9" height="0.9" fill="#4d4d52"/><rect x="38" y="4.2" width="0.9" height="0.9" fill="#4d4d52"/><rect x="40" y="0.0" width="0.9" height="0.9" fill="#4d4d52"/><rect x="40" y="2.8" width="0.9" height="0.9" fill="#4d4d52"/><rect x="42" y="1.4" width="0.9" height="0.9" fill="#4d4d52"/><rect x="42" y="4.2" width="0.9" height="0.9" fill="#4d4d52"/><rect x="44" y="0.0" width="0.9" height="0.9" fill="#4d4d52"/><rect x="44" y="2.8" width="0.9" height="0.9" fill="#4d4d52"/><rect x="46" y="1.4" width="0.9" height="0.9" fill="#4d4d52"/><rect x="46" y="4.2" width="0.9" height="0.9" fill="#4d4d52"/><rect x="48" y="0.0" width="0.9" height="0.9" fill="#4d4d52"/><rect x="48" y="2.8" width="0.9" height="0.9" fill="#4d4d52"/><rect x="50" y="1.4" width="0.9" height="0.9" fill="#4d4d52"/><rect x="50" y="4.2" width="0.9" height="0.9" fill="#4d4d52"/><rect x="52" y="0.0" width="0.9" height="0.9" fill="#4d4d52"/><rect x="52" y="2.8" width="0.9" height="0.9" fill="#4d4d52"/><rect x="54" y="1.4" width="0.9" height="0.9" fill="#4d4d52"/><rect x="54" y="4.2" width="0.9" height="0.9" fill="#4d4d52"/><rect x="56" y="0.0" width="0.9" height="0.9" fill="#4d4d52"/><rect x="56" y="2.8" width="0.9" height="0.9" fill="#4d4d52"/><rect x="58" y="1.4" width="0.9" height="0.9" fill="#4d4d52"/><rect x="58" y="4.2" width="0.9" height="0.9" fill="#4d4d52"/><rect x="60" y="0.0" width="0.9" height="0.9" fill="#4d4d52"/><rect x="60" y="2.8" width="0.9" height="0.9" fill="#4d4d52"/><rect x="62" y="1.4" width="0.9" height="0.9" fill="#4d4d52"/><rect x="62" y="4.2" width="0.9" height="0.9" fill="#4d4d52"/><rect x="64" y="0.0" width="0.9" height="0.9" fill="#4d4d52"/><rect x="64" y="2.8" width="0.9" height="0.9" fill="#4d4d52"/><rect x="66" y="1.4" width="0.9" height="0.9" fill="#4d4d52"/><rect x="66" y="4.2" width="0.9" height="0.9" fill="#4d4d52"/><rect x="68" y="0.0" width="0.9" height="0.9" fill="#4d4d52"/><rect x="68" y="2.8" width="0.9" height="0.9" fill="#4d4d52"/><rect x="70" y="1.4" width="0.9" height="0.9" fill="#4d4d52"/><rect x="70" y="4.2" width="0.9" height="0.9" fill="#4d4d52"/><rect x="72" y="0.0" width="0.9" height="0.9" fill="#4d4d52"/><rect x="72" y="2.8" width="0.9" height="0.9" fill="#4d4d52"/><rect x="74" y="1.4" width="0.9" height="0.9" fill="#4d4d52"/><rect x="74" y="4.2" width="0.9" height="0.9" fill="#4d4d52"/><rect x="76" y="0.0" width="0.9" height="0.9" fill="#4d4d52"/><rect x="76" y="2.8" width="0.9" height="0.9" fill="#4d4d52"/><rect x="78" y="1.4" width="0.9" height="0.9" fill="#4d4d52"/><rect x="78" y="4.2" width="0.9" height="0.9" fill="#4d4d52"/><rect x="80" y="0.0" width="0.9" height="0.9" fill="#4d4d52"/><rect x="80" y="2.8" width="0.9" height="0.9" fill="#4d4d52"/></svg>
<svg style="left:986.00px;top:53.84px;" width="6.0" height="3.5999999999999996" viewBox="0 0 5 3"><path d="M0 0 H5 L2.5 2.6 Z" fill="#f1f1f1"/></svg>
<svg style="left:997.50px;top:50.50px;" width="6" height="9" viewBox="0 0 6 9"><path d="M1.6 0.6 H4.4 V4.6 H1.6 Z M0.5 4.8 H5.5 M3 4.8 V8.6" fill="none" stroke="#f1f1f1" stroke-width="1"/><path d="M3.6 0.6 V4.6" stroke="#f1f1f1" stroke-width="1"/></svg>
<svg style="left:1007.50px;top:51.50px;" width="8" height="8" viewBox="0 0 8 8"><path d="M1 1 L7 7 M7 1 L1 7" stroke="#f1f1f1" stroke-width="1.2"/></svg>
<svg style="left:836.00px;top:66.80px;" width="9" height="9" viewBox="0 0 9 9"><circle cx="4.5" cy="4.5" r="3.7" fill="none" stroke="#55555a" stroke-width="1.1"/><path d="M5.2 2.6 L3.2 4.5 L5.2 6.4 M3.3 4.5 H6.6" stroke="#55555a" stroke-width="1" fill="none"/></svg>
<svg style="left:850.50px;top:66.80px;" width="9" height="9" viewBox="0 0 9 9"><circle cx="4.5" cy="4.5" r="3.7" fill="none" stroke="#55555a" stroke-width="1.1"/><path d="M3.8 2.6 L5.8 4.5 L3.8 6.4 M2.4 4.5 H5.7" stroke="#55555a" stroke-width="1" fill="none"/></svg>
<svg style="left:864.00px;top:66.50px;" width="11" height="10.5" viewBox="0 0 11 10.5"><path d="M0.6 5.4 L5.5 0.8 L10.4 5.4 M2 4.6 V9.8 H4.4 V6.6 H6.6 V9.8 H9 V4.6" fill="none" stroke="#f1f1f1" stroke-width="1.1"/><path d="M7.8 1 V2.6" stroke="#f1f1f1" stroke-width="1"/></svg>
<svg style="left:878.50px;top:66.00px;" width="12" height="11" viewBox="0 0 12 11"><rect x="4.5" y="0.8" width="6.4" height="5.6" fill="#dcb67a"/><rect x="0.7" y="3.4" width="7.4" height="5.6" fill="#252526" stroke="#f1f1f1" stroke-width="1"/><path d="M0.7 4.4 H8.1" stroke="#f1f1f1" stroke-width="1.4"/><path d="M9.4 7 V10 M8.2 8.8 L9.4 10.2 L10.6 8.8" stroke="#66b4f4" stroke-width=".9" fill="none"/></svg>
<svg style="left:892.50px;top:70.50px;" width="5.0" height="3.0" viewBox="0 0 5 3"><path d="M0 0 H5 L2.5 2.6 Z" fill="#999999"/></svg>
<div style="left:902.00px;top:65.50px;width:1.00px;height:13.00px;background:#46464a;"></div>
<svg style="left:906.50px;top:65.50px;" width="12" height="12" viewBox="0 0 12 12"><circle cx="6.6" cy="6.8" r="3.6" fill="none" stroke="#f1f1f1" stroke-width="1"/><path d="M6.6 4.8 V7 H8.4" fill="none" stroke="#f1f1f1" stroke-width=".9"/><path d="M0.6 0.8 H3.6 L2.1 2.8 Z" fill="#f1f1f1"/></svg>
<svg style="left:920.50px;top:70.50px;" width="5.0" height="3.0" viewBox="0 0 5 3"><path d="M0 0 H5 L2.5 2.6 Z" fill="#999999"/></svg>
<svg style="left:930.00px;top:67.40px;" width="9" height="9" viewBox="0 0 10 10"><path d="M1 3 H9 M6.6 0.8 L9 3 L6.6 5.2 M9 7 H1 M3.4 4.8 L1 7 L3.4 9.2" fill="none" stroke="#e8e8e8" stroke-width="1.05"/></svg>
<svg style="left:944.40px;top:67.40px;" width="9.2" height="9.2" viewBox="0 0 10 10"><path d="M2.8 2.8 V0.8 H9 V6.2 H7" fill="none" stroke="#f1f1f1" stroke-width="1"/><rect x="0.8" y="3" width="6" height="5.6" fill="#252526" stroke="#f1f1f1" stroke-width="1"/><path d="M2.2 5.8 H5.4" stroke="#f1f1f1" stroke-width="1"/></svg>
<svg style="left:957.50px;top:66.00px;" width="11" height="12" viewBox="0 0 11 12"><path d="M3.2 2.8 V0.8 H7.6 L9.8 3 V8.6 H8" fill="none" stroke="#f1f1f1" stroke-width="1"/><path d="M0.8 3 H5.4 L7.4 5 V11 H0.8 Z" fill="#252526" stroke="#f1f1f1" stroke-width="1"/><circle cx="4.2" cy="8" r="1.6" fill="none" stroke="#f1f1f1" stroke-width=".8"/></svg>
<div style="left:973.00px;top:65.50px;width:1.00px;height:13.00px;background:#46464a;"></div>
<div style="left:976.00px;top:64.30px;width:15.00px;height:14.20px;background:#1f1f20;box-sizing:border-box;border:1px solid #2a72ba"></div>
<div style="left:1000.50px;top:64.50px;width:1.00px;height:12.50px;background:#3a3a3e;"></div>
<svg style="left:978.50px;top:67.00px;" width="10" height="10" viewBox="0 0 10 10"><rect x="0.6" y="0.6" width="2.4" height="2.4" fill="#f1f1f1"/><rect x="3.6" y="3.6" width="2.6" height="2.6" fill="#f1f1f1"/><rect x="6.4" y="6.4" width="3" height="3" fill="#c8c8c8"/><path d="M1.8 3 V4.8 H3.6 M4.8 6.2 V7.8 H6.4" fill="none" stroke="#f1f1f1" stroke-width=".7"/></svg>
<svg style="left:992.00px;top:70.50px;" width="5.0" height="3.0" viewBox="0 0 5 3"><path d="M0 0 H5 L2.5 2.6 Z" fill="#999999"/></svg>
<svg style="left:1012.50px;top:64.80px;" width="6" height="4" viewBox="0 0 6 4"><path d="M0.5 0.4 L2.2 2 L0.5 3.6 M3.4 0.4 L5.1 2 L3.4 3.6" fill="none" stroke="#6a6a6e" stroke-width=".8"/></svg>
<div style="left:831.20px;top:80.50px;width:187.80px;height:14.40px;background:#2d2d30;box-sizing:border-box;border:1px solid #38383c"></div>
<div style="left:1011.60px;top:80.50px;width:7.40px;height:14.40px;background:#3f3f46;"></div>
<span class="t s" id="t37" style="left:834.00px;top:82.70px;font-size:8.0px;line-height:12px;color:#999999;letter-spacing:-0.034px">Search Solution Explorer (Ctrl+$)</span>
<svg style="left:1000.50px;top:83.30px;" width="10" height="10" viewBox="0 0 10 10"><circle cx="6.2" cy="3.8" r="2.6" fill="none" stroke="#f1f1f1" stroke-width="1.5"/><path d="M4.4 5.6 L1 9" stroke="#f1f1f1" stroke-width="1.7"/></svg>
<svg style="left:1013.10px;top:87.30px;" width="5.0" height="3.0" viewBox="0 0 5 3"><path d="M0 0 H5 L2.5 2.6 Z" fill="#f1f1f1"/></svg>
<div style="left:831.20px;top:96.00px;width:187.60px;height:419.80px;background:#252526;"></div>
<div style="left:831.20px;top:342.11px;width:176.80px;height:12.27px;background:#3f3f46;"></div>
<div id="treeclip" style="left:0;top:96.0px;width:1008.0px;height:408.8px;overflow:hidden">
<span class="t s" id="t38" style="left:925.00px;top:1.75px;font-size:8.0px;line-height:12px;color:#f1f1f1;letter-spacing:-0.033px">LoginWith2fa.cshtml</span>
<span class="t s" id="t39" style="left:925.00px;top:14.02px;font-size:8.0px;line-height:12px;color:#f1f1f1;letter-spacing:-0.127px">LoginWithRecoveryCodes.cshtml</span>
<span class="t s" id="t40" style="left:925.00px;top:26.28px;font-size:8.0px;line-height:12px;color:#f1f1f1;letter-spacing:-0.024px">Logout.cshtml</span>
<span class="t s" id="t41" style="left:925.00px;top:38.55px;font-size:8.0px;line-height:12px;color:#f1f1f1;letter-spacing:-0.113px">Register.cshtml</span>
<span class="t s" id="t42" style="left:937.00px;top:50.82px;font-size:8.0px;line-height:12px;color:#f1f1f1;letter-spacing:-0.161px">Register.cshtml.cs</span>
<span class="t s" id="t43" style="left:925.00px;top:63.09px;font-size:8.0px;line-height:12px;color:#f1f1f1;letter-spacing:-0.049px">RegisterConfirmation.cshtml</span>
<span class="t s" id="t44" style="left:937.00px;top:75.35px;font-size:8.0px;line-height:12px;color:#f1f1f1;letter-spacing:0.016px">RegisterConfirmation.cshtml.cs</span>
<span class="t s" id="t45" style="left:925.00px;top:87.62px;font-size:8.0px;line-height:12px;color:#f1f1f1;letter-spacing:-0.268px">ResetPassword.cshtml</span>
<span class="t s" id="t46" style="left:925.00px;top:99.89px;font-size:8.0px;line-height:12px;color:#f1f1f1;letter-spacing:-0.247px">ResetPasswordConfirmation.cshtml</span>
<span class="t s" id="t47" style="left:913.00px;top:112.15px;font-size:8.0px;line-height:12px;color:#f1f1f1;letter-spacing:-0.177px">_ValidationScriptsPartial.cshtml</span>
<span class="t s" id="t48" style="left:913.00px;top:124.42px;font-size:8.0px;line-height:12px;color:#f1f1f1;letter-spacing:-0.087px">_ViewImports.cshtml</span>
<span class="t s" id="t49" style="left:913.00px;top:136.69px;font-size:8.0px;line-height:12px;color:#f1f1f1;letter-spacing:-0.169px">_ViewStart.cshtml</span>
<span class="t s" id="t50" style="left:913.00px;top:148.95px;font-size:8.0px;line-height:12px;color:#f1f1f1;letter-spacing:-0.139px">Error.cshtml</span>
<span class="t s" id="t51" style="left:901.00px;top:161.22px;font-size:8.0px;line-height:12px;color:#f1f1f1;letter-spacing:-0.037px">IdentityHostingStartup.cs</span>
<span class="t s" id="t52" style="left:877.00px;top:173.49px;font-size:8.0px;line-height:12px;color:#f1f1f1;letter-spacing:-0.035px">Controllers</span>
<span class="t s" id="t53" style="left:889.00px;top:185.75px;font-size:8.0px;line-height:12px;color:#f1f1f1;letter-spacing:-0.016px">DocentController.cs</span>
<span class="t s" id="t54" style="left:889.00px;top:198.02px;font-size:8.0px;line-height:12px;color:#f1f1f1;letter-spacing:-0.036px">HomeController.cs</span>
<span class="t s" id="t55" style="left:889.00px;top:210.29px;font-size:8.0px;line-height:12px;color:#f1f1f1;letter-spacing:-0.160px">LesController.cs</span>
<span class="t s" id="t56" style="left:889.00px;top:222.56px;font-size:8.0px;line-height:12px;color:#f1f1f1;letter-spacing:-0.066px">LokaalController.cs</span>
<span class="t s" id="t57" style="left:889.00px;top:234.82px;font-size:8.0px;line-height:12px;color:#f1f1f1;letter-spacing:-0.052px">StudentController.cs</span>
<span class="t s" id="t58" style="left:889.00px;top:247.09px;font-size:8.0px;line-height:12px;color:#f1f1f1;letter-spacing:-0.104px">VakController.cs</span>
<span class="t s" id="t59" style="left:877.00px;top:259.36px;font-size:8.0px;line-height:12px;color:#f1f1f1;letter-spacing:0.089px">Migrations</span>
<span class="t s" id="t60" style="left:889.00px;top:271.62px;font-size:8.0px;line-height:12px;color:#f1f1f1;letter-spacing:-0.202px">20200321094504_DbInit.cs</span>
<span class="t s" id="t61" style="left:901.00px;top:283.89px;font-size:8.0px;line-height:12px;color:#f1f1f1;letter-spacing:-0.189px">20200321094504_DbInit.Designer.cs</span>
<span class="t s" id="t62" style="left:901.00px;top:296.16px;font-size:8.0px;line-height:12px;color:#f1f1f1;letter-spacing:0.116px">DbInit</span>
<span class="t s" id="t63" style="left:889.00px;top:308.43px;font-size:8.0px;line-height:12px;color:#f1f1f1;letter-spacing:-0.309px">20200409095215_CreateIdentiyScheme.cs</span>
<span class="t s" id="t64" style="left:901.00px;top:320.69px;font-size:8.0px;line-height:12px;color:#f1f1f1;letter-spacing:-0.223px">20200409095215_CreateIdentiyScheme.Designer.cs</span>
<span class="t s" id="t65" style="left:901.00px;top:332.96px;font-size:8.0px;line-height:12px;color:#f1f1f1;letter-spacing:-0.155px">CreateIdentiyScheme</span>
<span class="t s" id="t66" style="left:889.00px;top:345.23px;font-size:8.0px;line-height:12px;color:#f1f1f1;letter-spacing:-0.226px">20200409141133_StudentenEnDocenten.cs</span>
<span class="t s" id="t67" style="left:901.00px;top:357.49px;font-size:8.0px;line-height:12px;color:#f1f1f1;letter-spacing:-0.204px">20200409141133_StudentenEnDocenten.Designer.cs</span>
<span class="t s" id="t68" style="left:901.00px;top:369.76px;font-size:8.0px;line-height:12px;color:#f1f1f1;letter-spacing:-0.132px">StudentenEnDocenten</span>
<span class="t s" id="t69" style="left:889.00px;top:382.03px;font-size:8.0px;line-height:12px;color:#f1f1f1;letter-spacing:-0.241px">20200416071005_StudentVak.cs</span>
<span class="t s" id="t70" style="left:901.00px;top:394.29px;font-size:8.0px;line-height:12px;color:#f1f1f1;letter-spacing:-0.247px">20200416071005_StudentVak.Designer.cs</span>
<span class="t s" id="t71" style="left:901.00px;top:406.56px;font-size:8.0px;line-height:12px;color:#f1f1f1;letter-spacing:-0.078px">StudentVak</span>
<svg style="left:0;top:-96.0px" width="1008.0" height="576" viewBox="0 0 1008.0 576"><path d="M899.0 100.0 L901.9 102.9 L899.0 105.8 Z" fill="none" stroke="#e0e0e0" stroke-width="0.8"/><rect x="907.0" y="103.0" width="3.4" height="2.8" fill="#1b97dc"/><path d="M907.7 103.0 V102.0 A1 1 0 0 1 909.7 102.0 V103.0" fill="none" stroke="#1b97dc" stroke-width="0.7"/><path d="M913.2 99.1 H917.3 L919.3 101.1 V106.9 H913.2 Z" fill="none" stroke="#a6a6a6" stroke-width="0.8"/><path d="M917.1 99.1 V101.3 H919.3" fill="none" stroke="#a6a6a6" stroke-width="0.6"/><circle cx="916.1" cy="103.9" r="1.7" fill="#4a944a"/><circle cx="916.1" cy="103.9" r="0.6" fill="#252526"/><path d="M899.0 112.3 L901.9 115.2 L899.0 118.1 Z" fill="none" stroke="#e0e0e0" stroke-width="0.8"/><rect x="907.0" y="115.3" width="3.4" height="2.8" fill="#1b97dc"/><path d="M907.7 115.3 V114.3 A1 1 0 0 1 909.7 114.3 V115.3" fill="none" stroke="#1b97dc" stroke-width="0.7"/><path d="M913.2 111.4 H917.3 L919.3 113.4 V119.2 H913.2 Z" fill="none" stroke="#a6a6a6" stroke-width="0.8"/><path d="M917.1 111.4 V113.6 H919.3" fill="none" stroke="#a6a6a6" stroke-width="0.6"/><circle cx="916.1" cy="116.2" r="1.7" fill="#4a944a"/><circle cx="916.1" cy="116.2" r="0.6" fill="#252526"/><path d="M899.0 124.5 L901.9 127.4 L899.0 130.3 Z" fill="none" stroke="#e0e0e0" stroke-width="0.8"/><rect x="907.0" y="127.5" width="3.4" height="2.8" fill="#1b97dc"/><path d="M907.7 127.5 V126.5 A1 1 0 0 1 909.7 126.5 V127.5" fill="none" stroke="#1b97dc" stroke-width="0.7"/><path d="M913.2 123.6 H917.3 L919.3 125.6 V131.4 H913.2 Z" fill="none" stroke="#a6a6a6" stroke-width="0.8"/><path d="M917.1 123.6 V125.8 H919.3" fill="none" stroke="#a6a6a6" stroke-width="0.6"/><circle cx="916.1" cy="128.4" r="1.7" fill="#4a944a"/><circle cx="916.1" cy="128.4" r="0.6" fill="#252526"/><path d="M902.7 137.5 V141.7 H898.5 Z" fill="#e6e6e6"/><rect x="907.0" y="139.8" width="3.4" height="2.8" fill="#1b97dc"/><path d="M907.7 139.8 V138.8 A1 1 0 0 1 909.7 138.8 V139.8" fill="none" stroke="#1b97dc" stroke-width="0.7"/><path d="M913.2 135.9 H917.3 L919.3 137.9 V143.7 H913.2 Z" fill="none" stroke="#a6a6a6" stroke-width="0.8"/><path d="M917.1 135.9 V138.1 H919.3" fill="none" stroke="#a6a6a6" stroke-width="0.6"/><circle cx="916.1" cy="140.7" r="1.7" fill="#4a944a"/><circle cx="916.1" cy="140.7" r="0.6" fill="#252526"/><path d="M911.0 149.1 L913.9 152.0 L911.0 154.9 Z" fill="none" stroke="#e0e0e0" stroke-width="0.8"/><rect x="919.0" y="152.1" width="3.4" height="2.8" fill="#1b97dc"/><path d="M919.7 152.1 V151.1 A1 1 0 0 1 921.7 151.1 V152.1" fill="none" stroke="#1b97dc" stroke-width="0.7"/><path d="M929.1 150.7 A2.1 2.1 0 1 0 929.1 153.5" fill="none" stroke="#62b862" stroke-width="1.2"/><path d="M930.5 149.6 V152.2 M931.8 149.6 V152.2 M929.8 150.4 H932.5 M929.8 151.4 H932.5" stroke="#62b862" stroke-width="0.6" fill="none"/><path d="M902.7 162.0 V166.2 H898.5 Z" fill="#e6e6e6"/><rect x="907.0" y="164.3" width="3.4" height="2.8" fill="#1b97dc"/><path d="M907.7 164.3 V163.3 A1 1 0 0 1 909.7 163.3 V164.3" fill="none" stroke="#1b97dc" stroke-width="0.7"/><path d="M913.2 160.4 H917.3 L919.3 162.4 V168.2 H913.2 Z" fill="none" stroke="#a6a6a6" stroke-width="0.8"/><path d="M917.1 160.4 V162.6 H919.3" fill="none" stroke="#a6a6a6" stroke-width="0.6"/><circle cx="916.1" cy="165.2" r="1.7" fill="#4a944a"/><circle cx="916.1" cy="165.2" r="0.6" fill="#252526"/><path d="M911.0 173.6 L913.9 176.5 L911.0 179.4 Z" fill="none" stroke="#e0e0e0" stroke-width="0.8"/><rect x="919.0" y="176.6" width="3.4" height="2.8" fill="#1b97dc"/><path d="M919.7 176.6 V175.6 A1 1 0 0 1 921.7 175.6 V176.6" fill="none" stroke="#1b97dc" stroke-width="0.7"/><path d="M929.1 175.2 A2.1 2.1 0 1 0 929.1 178.0" fill="none" stroke="#62b862" stroke-width="1.2"/><path d="M930.5 174.1 V176.7 M931.8 174.1 V176.7 M929.8 174.9 H932.5 M929.8 175.9 H932.5" stroke="#62b862" stroke-width="0.6" fill="none"/><path d="M899.0 185.9 L901.9 188.8 L899.0 191.7 Z" fill="none" stroke="#e0e0e0" stroke-width="0.8"/><rect x="907.0" y="188.9" width="3.4" height="2.8" fill="#1b97dc"/><path d="M907.7 188.9 V187.9 A1 1 0 0 1 909.7 187.9 V188.9" fill="none" stroke="#1b97dc" stroke-width="0.7"/><path d="M913.2 185.0 H917.3 L919.3 187.0 V192.8 H913.2 Z" fill="none" stroke="#a6a6a6" stroke-width="0.8"/><path d="M917.1 185.0 V187.2 H919.3" fill="none" stroke="#a6a6a6" stroke-width="0.6"/><circle cx="916.1" cy="189.8" r="1.7" fill="#4a944a"/><circle cx="916.1" cy="189.8" r="0.6" fill="#252526"/><path d="M899.0 198.1 L901.9 201.0 L899.0 203.9 Z" fill="none" stroke="#e0e0e0" stroke-width="0.8"/><rect x="907.0" y="201.1" width="3.4" height="2.8" fill="#1b97dc"/><path d="M907.7 201.1 V200.1 A1 1 0 0 1 909.7 200.1 V201.1" fill="none" stroke="#1b97dc" stroke-width="0.7"/><path d="M913.2 197.2 H917.3 L919.3 199.2 V205.0 H913.2 Z" fill="none" stroke="#a6a6a6" stroke-width="0.8"/><path d="M917.1 197.2 V199.4 H919.3" fill="none" stroke="#a6a6a6" stroke-width="0.6"/><circle cx="916.1" cy="202.0" r="1.7" fill="#4a944a"/><circle cx="916.1" cy="202.0" r="0.6" fill="#252526"/><rect x="895.0" y="213.4" width="3.4" height="2.8" fill="#1b97dc"/><path d="M895.7 213.4 V212.4 A1 1 0 0 1 897.7 212.4 V213.4" fill="none" stroke="#1b97dc" stroke-width="0.7"/><path d="M901.2 209.5 H905.3 L907.3 211.5 V217.3 H901.2 Z" fill="none" stroke="#a6a6a6" stroke-width="0.8"/><path d="M905.1 209.5 V211.7 H907.3" fill="none" stroke="#a6a6a6" stroke-width="0.6"/><circle cx="904.1" cy="214.3" r="1.7" fill="#4a944a"/><circle cx="904.1" cy="214.3" r="0.6" fill="#252526"/><rect x="895.0" y="225.7" width="3.4" height="2.8" fill="#1b97dc"/><path d="M895.7 225.7 V224.7 A1 1 0 0 1 897.7 224.7 V225.7" fill="none" stroke="#1b97dc" stroke-width="0.7"/><path d="M901.2 221.8 H905.3 L907.3 223.8 V229.6 H901.2 Z" fill="none" stroke="#a6a6a6" stroke-width="0.8"/><path d="M905.1 221.8 V224.0 H907.3" fill="none" stroke="#a6a6a6" stroke-width="0.6"/><circle cx="904.1" cy="226.6" r="1.7" fill="#4a944a"/><circle cx="904.1" cy="226.6" r="0.6" fill="#252526"/><rect x="895.0" y="237.9" width="3.4" height="2.8" fill="#1b97dc"/><path d="M895.7 237.9 V236.9 A1 1 0 0 1 897.7 236.9 V237.9" fill="none" stroke="#1b97dc" stroke-width="0.7"/><path d="M901.2 234.0 H905.3 L907.3 236.0 V241.8 H901.2 Z" fill="none" stroke="#a6a6a6" stroke-width="0.8"/><path d="M905.1 234.0 V236.2 H907.3" fill="none" stroke="#a6a6a6" stroke-width="0.6"/><circle cx="904.1" cy="238.8" r="1.7" fill="#4a944a"/><circle cx="904.1" cy="238.8" r="0.6" fill="#252526"/><path d="M887.0 247.2 L889.9 250.1 L887.0 253.0 Z" fill="none" stroke="#e0e0e0" stroke-width="0.8"/><rect x="895.0" y="250.2" width="3.4" height="2.8" fill="#1b97dc"/><path d="M895.7 250.2 V249.2 A1 1 0 0 1 897.7 249.2 V250.2" fill="none" stroke="#1b97dc" stroke-width="0.7"/><path d="M901.2 246.3 H905.3 L907.3 248.3 V254.1 H901.2 Z" fill="none" stroke="#a6a6a6" stroke-width="0.8"/><path d="M905.1 246.3 V248.5 H907.3" fill="none" stroke="#a6a6a6" stroke-width="0.6"/><circle cx="904.1" cy="251.1" r="1.7" fill="#4a944a"/><circle cx="904.1" cy="251.1" r="0.6" fill="#252526"/><path d="M875.0 259.5 L877.9 262.4 L875.0 265.3 Z" fill="none" stroke="#e0e0e0" stroke-width="0.8"/><rect x="883.0" y="262.5" width="3.4" height="2.8" fill="#1b97dc"/><path d="M883.7 262.5 V261.5 A1 1 0 0 1 885.7 261.5 V262.5" fill="none" stroke="#1b97dc" stroke-width="0.7"/><path d="M893.1 261.1 A2.1 2.1 0 1 0 893.1 263.9" fill="none" stroke="#62b862" stroke-width="1.2"/><path d="M894.5 260.0 V262.6 M895.8 260.0 V262.6 M893.8 260.8 H896.5 M893.8 261.8 H896.5" stroke="#62b862" stroke-width="0.6" fill="none"/><path d="M854.7 272.4 V276.6 H850.5 Z" fill="#e6e6e6"/><rect x="859.0" y="274.7" width="3.4" height="2.8" fill="#1b97dc"/><path d="M859.7 274.7 V273.7 A1 1 0 0 1 861.7 273.7 V274.7" fill="none" stroke="#1b97dc" stroke-width="0.7"/><path d="M864.7 278.0 V271.2 H867.7 L868.7 272.4 H872.7 V274.0" fill="none" stroke="#dcb67a" stroke-width="1"/><path d="M864.7 278.2 L866.7 274.0 H874.1 L872.3 278.2 Z" fill="#dcb67a"/><path d="M863.0 284.0 L865.9 286.9 L863.0 289.8 Z" fill="none" stroke="#e0e0e0" stroke-width="0.8"/><rect x="871.0" y="287.0" width="3.4" height="2.8" fill="#1b97dc"/><path d="M871.7 287.0 V286.0 A1 1 0 0 1 873.7 286.0 V287.0" fill="none" stroke="#1b97dc" stroke-width="0.7"/><path d="M881.1 285.6 A2.1 2.1 0 1 0 881.1 288.4" fill="none" stroke="#62b862" stroke-width="1.2"/><path d="M882.5 284.5 V287.1 M883.8 284.5 V287.1 M881.8 285.3 H884.5 M881.8 286.3 H884.5" stroke="#62b862" stroke-width="0.6" fill="none"/><path d="M863.0 296.3 L865.9 299.2 L863.0 302.1 Z" fill="none" stroke="#e0e0e0" stroke-width="0.8"/><rect x="871.0" y="299.3" width="3.4" height="2.8" fill="#1b97dc"/><path d="M871.7 299.3 V298.3 A1 1 0 0 1 873.7 298.3 V299.3" fill="none" stroke="#1b97dc" stroke-width="0.7"/><path d="M881.1 297.9 A2.1 2.1 0 1 0 881.1 300.7" fill="none" stroke="#62b862" stroke-width="1.2"/><path d="M882.5 296.8 V299.4 M883.8 296.8 V299.4 M881.8 297.6 H884.5 M881.8 298.6 H884.5" stroke="#62b862" stroke-width="0.6" fill="none"/><path d="M863.0 308.5 L865.9 311.4 L863.0 314.3 Z" fill="none" stroke="#e0e0e0" stroke-width="0.8"/><rect x="871.0" y="311.5" width="3.4" height="2.8" fill="#1b97dc"/><path d="M871.7 311.5 V310.5 A1 1 0 0 1 873.7 310.5 V311.5" fill="none" stroke="#1b97dc" stroke-width="0.7"/><path d="M881.1 310.1 A2.1 2.1 0 1 0 881.1 312.9" fill="none" stroke="#62b862" stroke-width="1.2"/><path d="M882.5 309.0 V311.6 M883.8 309.0 V311.6 M881.8 309.8 H884.5 M881.8 310.8 H884.5" stroke="#62b862" stroke-width="0.6" fill="none"/><path d="M863.0 320.8 L865.9 323.7 L863.0 326.6 Z" fill="none" stroke="#e0e0e0" stroke-width="0.8"/><rect x="871.0" y="323.8" width="3.4" height="2.8" fill="#1b97dc"/><path d="M871.7 323.8 V322.8 A1 1 0 0 1 873.7 322.8 V323.8" fill="none" stroke="#1b97dc" stroke-width="0.7"/><path d="M881.1 322.4 A2.1 2.1 0 1 0 881.1 325.2" fill="none" stroke="#62b862" stroke-width="1.2"/><path d="M882.5 321.3 V323.9 M883.8 321.3 V323.9 M881.8 322.1 H884.5 M881.8 323.1 H884.5" stroke="#62b862" stroke-width="0.6" fill="none"/><path d="M863.0 333.1 L865.9 336.0 L863.0 338.9 Z" fill="none" stroke="#e0e0e0" stroke-width="0.8"/><rect x="871.0" y="336.1" width="3.4" height="2.8" fill="#1b97dc"/><path d="M871.7 336.1 V335.1 A1 1 0 0 1 873.7 335.1 V336.1" fill="none" stroke="#1b97dc" stroke-width="0.7"/><path d="M881.1 334.7 A2.1 2.1 0 1 0 881.1 337.5" fill="none" stroke="#62b862" stroke-width="1.2"/><path d="M882.5 333.6 V336.2 M883.8 333.6 V336.2 M881.8 334.4 H884.5 M881.8 335.4 H884.5" stroke="#62b862" stroke-width="0.6" fill="none"/><path d="M863.0 345.3 L865.9 348.2 L863.0 351.1 Z" fill="none" stroke="#e0e0e0" stroke-width="0.8"/><path d="M871.5 349.3 L872.6 350.9 L874.7 346.5" fill="none" stroke="#e51400" stroke-width="0.9"/><path d="M881.1 346.9 A2.1 2.1 0 1 0 881.1 349.7" fill="none" stroke="#62b862" stroke-width="1.2"/><path d="M882.5 345.8 V348.4 M883.8 345.8 V348.4 M881.8 346.6 H884.5 M881.8 347.6 H884.5" stroke="#62b862" stroke-width="0.6" fill="none"/><path d="M854.7 358.3 V362.5 H850.5 Z" fill="#e6e6e6"/><rect x="859.0" y="360.6" width="3.4" height="2.8" fill="#1b97dc"/><path d="M859.7 360.6 V359.6 A1 1 0 0 1 861.7 359.6 V360.6" fill="none" stroke="#1b97dc" stroke-width="0.7"/><path d="M864.7 363.9 V357.1 H867.7 L868.7 358.3 H872.7 V359.9" fill="none" stroke="#dcb67a" stroke-width="1"/><path d="M864.7 364.1 L866.7 359.9 H874.1 L872.3 364.1 Z" fill="#dcb67a"/><path d="M866.7 370.6 V374.8 H862.5 Z" fill="#e6e6e6"/><rect x="871.0" y="372.9" width="3.4" height="2.8" fill="#1b97dc"/><path d="M871.7 372.9 V371.9 A1 1 0 0 1 873.7 371.9 V372.9" fill="none" stroke="#1b97dc" stroke-width="0.7"/><path d="M881.1 371.5 A2.1 2.1 0 1 0 881.1 374.3" fill="none" stroke="#62b862" stroke-width="1.2"/><path d="M882.5 370.4 V373.0 M883.8 370.4 V373.0 M881.8 371.2 H884.5 M881.8 372.2 H884.5" stroke="#62b862" stroke-width="0.6" fill="none"/><path d="M875.0 382.1 L877.9 385.0 L875.0 387.9 Z" fill="none" stroke="#e0e0e0" stroke-width="0.8"/><rect x="883.0" y="385.1" width="3.4" height="2.8" fill="#1b97dc"/><path d="M883.7 385.1 V384.1 A1 1 0 0 1 885.7 384.1 V385.1" fill="none" stroke="#1b97dc" stroke-width="0.7"/><path d="M893.1 383.7 A2.1 2.1 0 1 0 893.1 386.5" fill="none" stroke="#62b862" stroke-width="1.2"/><path d="M894.5 382.6 V385.2 M895.8 382.6 V385.2 M893.8 383.4 H896.5 M893.8 384.4 H896.5" stroke="#62b862" stroke-width="0.6" fill="none"/><path d="M889.9 392.5 L892.8 395.4 L889.9 398.3 L887.0 395.4 Z" fill="#f0d08c"/><path d="M892.3 395.7 H893.8 V400.5 H894.9 M893.8 397.7 H894.9" fill="none" stroke="#dca04e" stroke-width="0.9"/><rect x="894.3" y="396.3" width="2.6" height="2.4" fill="#e4ac5a"/><rect x="894.3" y="399.5" width="2.6" height="2.4" fill="#e4ac5a"/><path d="M866.7 407.4 V411.6 H862.5 Z" fill="#e6e6e6"/><rect x="871.0" y="409.7" width="3.4" height="2.8" fill="#1b97dc"/><path d="M871.7 409.7 V408.7 A1 1 0 0 1 873.7 408.7 V409.7" fill="none" stroke="#1b97dc" stroke-width="0.7"/><path d="M881.1 408.3 A2.1 2.1 0 1 0 881.1 411.1" fill="none" stroke="#62b862" stroke-width="1.2"/><path d="M882.5 407.2 V409.8 M883.8 407.2 V409.8 M881.8 408.0 H884.5 M881.8 409.0 H884.5" stroke="#62b862" stroke-width="0.6" fill="none"/><path d="M875.0 418.9 L877.9 421.8 L875.0 424.7 Z" fill="none" stroke="#e0e0e0" stroke-width="0.8"/><rect x="883.0" y="421.9" width="3.4" height="2.8" fill="#1b97dc"/><path d="M883.7 421.9 V420.9 A1 1 0 0 1 885.7 420.9 V421.9" fill="none" stroke="#1b97dc" stroke-width="0.7"/><path d="M893.1 420.5 A2.1 2.1 0 1 0 893.1 423.3" fill="none" stroke="#62b862" stroke-width="1.2"/><path d="M894.5 419.4 V422.0 M895.8 419.4 V422.0 M893.8 420.2 H896.5 M893.8 421.2 H896.5" stroke="#62b862" stroke-width="0.6" fill="none"/><path d="M889.9 429.3 L892.8 432.2 L889.9 435.1 L887.0 432.2 Z" fill="#f0d08c"/><path d="M892.3 432.5 H893.8 V437.3 H894.9 M893.8 434.5 H894.9" fill="none" stroke="#dca04e" stroke-width="0.9"/><rect x="894.3" y="433.1" width="2.6" height="2.4" fill="#e4ac5a"/><rect x="894.3" y="436.3" width="2.6" height="2.4" fill="#e4ac5a"/><path d="M866.7 444.2 V448.4 H862.5 Z" fill="#e6e6e6"/><rect x="871.0" y="446.5" width="3.4" height="2.8" fill="#1b97dc"/><path d="M871.7 446.5 V445.5 A1 1 0 0 1 873.7 445.5 V446.5" fill="none" stroke="#1b97dc" stroke-width="0.7"/><path d="M881.1 445.1 A2.1 2.1 0 1 0 881.1 447.9" fill="none" stroke="#62b862" stroke-width="1.2"/><path d="M882.5 444.0 V446.6 M883.8 444.0 V446.6 M881.8 444.8 H884.5 M881.8 445.8 H884.5" stroke="#62b862" stroke-width="0.6" fill="none"/><path d="M875.0 455.7 L877.9 458.6 L875.0 461.5 Z" fill="none" stroke="#e0e0e0" stroke-width="0.8"/><rect x="883.0" y="458.7" width="3.4" height="2.8" fill="#1b97dc"/><path d="M883.7 458.7 V457.7 A1 1 0 0 1 885.7 457.7 V458.7" fill="none" stroke="#1b97dc" stroke-width="0.7"/><path d="M893.1 457.3 A2.1 2.1 0 1 0 893.1 460.1" fill="none" stroke="#62b862" stroke-width="1.2"/><path d="M894.5 456.2 V458.8 M895.8 456.2 V458.8 M893.8 457.0 H896.5 M893.8 458.0 H896.5" stroke="#62b862" stroke-width="0.6" fill="none"/><path d="M889.9 466.1 L892.8 469.0 L889.9 471.9 L887.0 469.0 Z" fill="#f0d08c"/><path d="M892.3 469.3 H893.8 V474.1 H894.9 M893.8 471.3 H894.9" fill="none" stroke="#dca04e" stroke-width="0.9"/><rect x="894.3" y="469.9" width="2.6" height="2.4" fill="#e4ac5a"/><rect x="894.3" y="473.1" width="2.6" height="2.4" fill="#e4ac5a"/><path d="M866.7 481.0 V485.2 H862.5 Z" fill="#e6e6e6"/><rect x="871.0" y="483.3" width="3.4" height="2.8" fill="#1b97dc"/><path d="M871.7 483.3 V482.3 A1 1 0 0 1 873.7 482.3 V483.3" fill="none" stroke="#1b97dc" stroke-width="0.7"/><path d="M881.1 481.9 A2.1 2.1 0 1 0 881.1 484.7" fill="none" stroke="#62b862" stroke-width="1.2"/><path d="M882.5 480.8 V483.4 M883.8 480.8 V483.4 M881.8 481.6 H884.5 M881.8 482.6 H884.5" stroke="#62b862" stroke-width="0.6" fill="none"/><path d="M875.0 492.5 L877.9 495.4 L875.0 498.3 Z" fill="none" stroke="#e0e0e0" stroke-width="0.8"/><rect x="883.0" y="495.5" width="3.4" height="2.8" fill="#1b97dc"/><path d="M883.7 495.5 V494.5 A1 1 0 0 1 885.7 494.5 V495.5" fill="none" stroke="#1b97dc" stroke-width="0.7"/><path d="M893.1 494.1 A2.1 2.1 0 1 0 893.1 496.9" fill="none" stroke="#62b862" stroke-width="1.2"/><path d="M894.5 493.0 V495.6 M895.8 493.0 V495.6 M893.8 493.8 H896.5 M893.8 494.8 H896.5" stroke="#62b862" stroke-width="0.6" fill="none"/><path d="M889.9 502.9 L892.8 505.8 L889.9 508.7 L887.0 505.8 Z" fill="#f0d08c"/><path d="M892.3 506.1 H893.8 V510.9 H894.9 M893.8 508.1 H894.9" fill="none" stroke="#dca04e" stroke-width="0.9"/><rect x="894.3" y="506.7" width="2.6" height="2.4" fill="#e4ac5a"/><rect x="894.3" y="509.9" width="2.6" height="2.4" fill="#e4ac5a"/></svg>
</div>
<div style="left:1008.00px;top:96.00px;width:11.30px;height:408.80px;background:#3e3e42;"></div>
<svg style="left:1010.70px;top:100.70px;" width="6" height="4" viewBox="0 0 6 4"><path d="M0 3.6 L3 0.4 L6 3.6 Z" fill="#999999"/></svg>
<svg style="left:1010.70px;top:497.50px;" width="6" height="4" viewBox="0 0 6 4"><path d="M0 0.4 L3 3.6 L6 0.4 Z" fill="#999999"/></svg>
<div style="left:1010.60px;top:201.00px;width:6.20px;height:83.70px;background:#686868;"></div>
<div style="left:831.20px;top:504.80px;width:176.80px;height:10.80px;background:#3e3e42;"></div>
<div style="left:1008.00px;top:504.80px;width:11.30px;height:10.80px;background:#3e3e42;"></div>
<svg style="left:834.30px;top:507.60px;" width="4" height="6" viewBox="0 0 4 6"><path d="M3.6 0 L0.4 3 L3.6 6 Z" fill="#999999"/></svg>
<svg style="left:1000.50px;top:507.60px;" width="4" height="6" viewBox="0 0 4 6"><path d="M0.4 0 L3.6 3 L0.4 6 Z" fill="#999999"/></svg>
<div style="left:841.70px;top:507.60px;width:104.80px;height:6.00px;background:#686868;"></div>
<div style="left:830.40px;top:515.80px;width:189.20px;height:14.40px;background:#2d2d30;"></div>
<div style="left:910.50px;top:515.80px;width:54.50px;height:13.70px;background:#252526;box-sizing:border-box;border:1px solid #3f3f46;border-top:none"></div>
<span class="t s" id="t72" style="left:834.70px;top:517.70px;font-size:8.0px;line-height:12px;color:#d0d0d0;letter-spacing:0.103px">Toolbox</span>
<span class="t s" id="t73" style="left:870.50px;top:517.70px;font-size:8.0px;line-height:12px;color:#d0d0d0;letter-spacing:-0.097px">Properties</span>
<span class="t s" id="t74" style="left:913.40px;top:517.70px;font-size:8.0px;line-height:12px;color:#0097fb;letter-spacing:-0.124px">Solution Ex...</span>
<span class="t s" id="t75" style="left:969.00px;top:517.70px;font-size:8.0px;line-height:12px;color:#d0d0d0;letter-spacing:-0.151px">Team Explo...</span>
<div style="left:0.00px;top:533.20px;width:1024.00px;height:16.00px;background:#007acc;"></div>
<svg style="left:3.00px;top:537.00px;" width="11" height="9" viewBox="0 0 11 9"><path d="M2.4 1 H10 L8.4 7.6 H0.8 Z" fill="none" stroke="#ffffff" stroke-width="1"/></svg>
<span class="t s" id="t76" style="left:19.00px;top:536.50px;font-size:8.0px;line-height:12px;color:#ffffff;letter-spacing:-0.215px">Item(s) Saved</span>
<svg style="left:793.80px;top:536.80px;" width="6.4" height="8.4" viewBox="0 0 6.4 8.4"><path d="M3.2 8 V1.2 M0.6 3.8 L3.2 1 L5.8 3.8" fill="none" stroke="#ffffff" stroke-width="1.1"/></svg>
<span class="t s" id="t77" style="left:806.00px;top:536.50px;font-size:8.0px;line-height:12px;color:#ffffff;">0</span>
<svg style="left:825.50px;top:537.00px;" width="8" height="8" viewBox="0 0 8 8"><path d="M0.6 7.4 L1.2 5.2 L5.6 0.8 L7.2 2.4 L2.8 6.8 Z" fill="#ffffff"/></svg>
<span class="t s" id="t78" style="left:839.00px;top:536.50px;font-size:8.0px;line-height:12px;color:#ffffff;">7</span>
<svg style="left:857.50px;top:535.80px;" width="11" height="11" viewBox="0 0 11 11"><path d="M5.5 0.6 L10.4 5.5 L5.5 10.4 L0.6 5.5 Z" fill="#ffffff"/><path d="M4.2 3.4 L6.6 5.8 M5.4 4.6 V7.6" stroke="#007acc" stroke-width="0.9" fill="none"/><circle cx="4.2" cy="3.4" r=".8" fill="#007acc"/><circle cx="6.8" cy="6" r=".8" fill="#007acc"/><circle cx="5.4" cy="7.8" r=".8" fill="#007acc"/></svg>
<span class="t s" id="t79" style="left:872.00px;top:536.50px;font-size:8.0px;line-height:12px;color:#ffffff;letter-spacing:-0.066px">LeerPlatform</span>
<svg style="left:932.50px;top:536.50px;" width="10" height="10" viewBox="0 0 10 10"><path d="M5 9.4 V5.6 L1.8 2.4 M5 5.6 L8.2 2.4" fill="none" stroke="#ffffff" stroke-width="1.1"/><circle cx="1.8" cy="2" r="1.3" fill="#ffffff"/><circle cx="8.2" cy="2" r="1.3" fill="#ffffff"/><circle cx="5" cy="5.4" r="1" fill="#ffffff"/></svg>
<span class="t s" id="t80" style="left:946.50px;top:536.50px;font-size:8.0px;line-height:12px;color:#ffffff;letter-spacing:0.008px">master</span>
<svg style="left:974.50px;top:539.60px;" width="5.4" height="3.4" viewBox="0 0 5.4 3.4"><path d="M0 3.2 L2.7 0.2 L5.4 3.2 Z" fill="#ffffff"/></svg>
<svg style="left:998.50px;top:536.00px;" width="10" height="10" viewBox="0 0 10 10"><path d="M1 7.4 C2.4 6.4 1.6 1 4.6 1 C7.6 1 6.8 6.4 8.2 7.4 Z" fill="#c9dff0"/><circle cx="4.6" cy="8.2" r="1" fill="#c9dff0"/></svg>
<div style="left:1004.6px;top:541px;width:7px;height:7px;border-radius:50%;background:#e51400"></div>
<span class="t s" id="t81" style="left:1006.60px;top:540.60px;font-size:5.6px;line-height:8px;color:#ffffff;">2</span>
<div style="left:0.00px;top:549.20px;width:1024.00px;height:26.80px;background:linear-gradient(90deg,#11394a 0%,#123d49 25%,#15434f 60%,#113a45 85%,#0f333d 100%);"></div>
<div style="left:264.40px;top:549.20px;width:32.20px;height:26.80px;background:#265867;"></div>
<div style="left:102.00px;top:574.60px;width:21.50px;height:1.40px;background:#7fc0dd;"></div>
<div style="left:302.00px;top:574.60px;width:25.50px;height:1.40px;background:#7fc0dd;"></div>
<div style="left:333.50px;top:574.60px;width:27.50px;height:1.40px;background:#7fc0dd;"></div>
<div style="left:432.00px;top:574.60px;width:26.00px;height:1.40px;background:#7fc0dd;"></div>
<div style="left:264.40px;top:574.60px;width:32.20px;height:1.40px;background:#9bd3ea;"></div>
<svg style="left:7.50px;top:554.10px;" width="17" height="17" viewBox="0 0 17 17"><path d="M3 4.4 L7.6 3.7 V8.2 H3 Z M8.3 3.6 L14 2.7 V8.2 H8.3 Z M3 8.9 H7.6 V13.4 L3 12.7 Z M8.3 8.9 H14 V14.4 L8.3 13.5 Z" fill="#ffffff"/></svg>
<svg style="left:39.80px;top:554.10px;" width="17" height="17" viewBox="0 0 17 17"><path d="M3 5.2 H10 M3 12.2 H10 M3.6 3.6 V13.8 M9.4 3.6 V13.8" fill="none" stroke="#e8e8e8" stroke-width="1"/><path d="M12.8 3.6 V13.8 M12.8 6.6 H14 M12.8 10.8 H14" stroke="#e8e8e8" stroke-width="1" fill="none"/></svg>
<svg style="left:73.70px;top:554.10px;" width="17" height="17" viewBox="0 0 17 17"><path transform="translate(-1.2 -1) scale(1.12)" d="M2.4 8 C2.8 3.4 6.4 1.6 9.4 1.8 C13.4 2 15.4 5.4 15 9.6 H6.4 C6.6 12.6 10.6 13.6 14 11.8 V14.6 C9.6 16.6 3.6 15.4 3.2 10 C3.2 7.6 5 5.6 7 5 C5 5.2 3.2 6.4 2.4 8 Z M6.4 7.4 H11.4 C11.4 4.6 6.8 4.4 6.4 7.4 Z" fill="#1e8fe6" fill-rule="evenodd"/></svg>
<svg style="left:106.10px;top:554.10px;" width="17" height="17" viewBox="0 0 17 17"><path d="M1.4 3.4 H6 L7.2 4.8 H15.6 V13.6 H1.4 Z" fill="#f8d25a"/><path d="M1.4 6.4 H15.6 V13.6 H1.4 Z" fill="#f0bf3a"/><path d="M4.6 9.4 H12.4 V13.6 H10.6 V11.2 H6.4 V13.6 H4.6 Z" fill="#3a8fd8"/></svg>
<svg style="left:139.50px;top:554.10px;" width="17" height="17" viewBox="0 0 17 17"><path d="M1 5 H16 V16 H1 Z" fill="#f4f4f4"/><path d="M5.8 5.2 C5.8 1 11.2 1 11.2 5.2" fill="none" stroke="#f4f4f4" stroke-width="1"/><rect x="6" y="7.8" width="2.2" height="2.2" fill="#f25022"/><rect x="8.8" y="7.8" width="2.2" height="2.2" fill="#7fba00"/><rect x="6" y="10.6" width="2.2" height="2.2" fill="#00a4ef"/><rect x="8.8" y="10.6" width="2.2" height="2.2" fill="#ffb900"/></svg>
<svg style="left:172.90px;top:554.10px;" width="17" height="17" viewBox="0 0 17 17"><circle cx="8.5" cy="9" r="7" fill="#ff8a1e"/><path d="M3 4.4 C4.2 2 6.4 1 8 1.4 C7.4 2.4 8 3.6 9.4 4 C12 2.4 13.2 0.6 13.2 0.6 C15.6 3 16.4 6.6 15.4 10 C14.4 13.6 11.4 16 8.5 16 C4.4 16 1.4 12.8 1.5 9 C1.5 7 2 5.6 3 4.4 Z" fill="#ff9a22"/><path d="M2 6 C4 4.6 6 4.6 7.4 6.4 C9 6 10.6 6.8 11 8 C9.4 8 8.6 9.4 9.4 10.6 C10.4 12 12.6 11.6 13.6 10 C13.8 13.4 11 15.8 8.2 15.8 C4.4 15.8 1.6 12.6 1.7 9 C1.7 7.8 1.8 6.8 2 6 Z" fill="#e8334a"/><circle cx="8" cy="9.4" r="3.2" fill="#7a3fd0"/><path d="M5 8.8 C6 7.4 8.4 7.2 9.6 8.2 C8.2 8.2 7.6 9.6 8.4 10.8 C6.8 11.6 5 10.6 5 8.8 Z" fill="#ffb43a"/></svg>
<svg style="left:206.00px;top:554.10px;" width="17" height="17" viewBox="0 0 17 17"><rect x="0.4" y="2.6" width="16.2" height="12.4" fill="#1b7fd0"/><path d="M0.4 8 L8.5 12.4 L16.6 8 V15 H0.4 Z" fill="#3ba6ee"/><path d="M0.8 3.4 L8.5 9.6 L16.2 3.4" fill="none" stroke="#d8eefc" stroke-width="1.1"/></svg>
<svg style="left:238.90px;top:554.10px;" width="17" height="17" viewBox="0 0 17 17"><rect x="0" y="0.4" width="17" height="16.2" fill="#0a0a0a"/><path d="M5.6 3 H7.6 L10 9.6 V3 H11.8 V14 H9.9 L7.4 7.2 V14 H5.6 Z" fill="#e50914"/></svg>
<svg style="left:272.00px;top:554.10px;" width="17" height="17" viewBox="0 0 17 17"><path d="M12 0.8 L16.2 2.6 V14.4 L12 16.2 L4.6 9.8 L1.8 12.2 L0.6 11.6 V5.4 L1.8 4.8 L4.6 7.2 Z M12 5.2 L7.8 8.5 L12 11.8 Z M2 7 V10 L3.6 8.5 Z" fill="#b17ce6" fill-rule="evenodd"/><path d="M12 0.8 L16.2 2.6 V14.4 L12 16.2 Z" fill="#8a53c8"/></svg>
<svg style="left:304.50px;top:554.10px;" width="17" height="17" viewBox="0 0 17 17"><rect x="5" y="1.4" width="11.4" height="14.2" rx="1" fill="#41a5ee"/><rect x="5" y="5" width="11.4" height="3.6" fill="#2b7cd3"/><rect x="5" y="8.6" width="11.4" height="3.6" fill="#185abd"/><rect x="5" y="12.2" width="11.4" height="3.4" fill="#103f91"/><rect x="0.6" y="4.4" width="8.6" height="8.6" rx="0.8" fill="#185abd"/></svg>
<span class="t s" id="t82" style="left:307.70px;top:558.40px;font-size:6px;line-height:9px;color:#ffffff;font-weight:bold;">W</span>
<svg style="left:337.20px;top:554.10px;" width="17" height="17" viewBox="0 0 17 17"><circle cx="8.5" cy="8.5" r="7.6" fill="#e33b2e"/><path d="M8.5 8.5 L1.9 4.7 A7.6 7.6 0 0 0 5.4 15.5 Z" fill="#2da94f"/><path d="M8.5 8.5 L5.4 15.5 A7.6 7.6 0 0 0 15.9 6.6 L8.5 6.6 Z" fill="#fcc31e"/><path d="M1.9 4.7 A7.6 7.6 0 0 1 15.9 6.6 H8.5 Z" fill="#e33b2e"/><circle cx="8.5" cy="8.5" r="3.7" fill="#ffffff"/><circle cx="8.5" cy="8.5" r="2.9" fill="#4c8bf5"/></svg>
<svg style="left:370.30px;top:554.10px;" width="17" height="17" viewBox="0 0 17 17"><circle cx="8.5" cy="8.5" r="7.6" fill="#f3f3f3"/><path d="M8.5 0.9 A7.6 7.6 0 0 1 16.1 8.5 L12 8.5 L8.5 4 Z" fill="#e8442c"/><path d="M16.1 8.5 A7.6 7.6 0 0 1 8.5 16.1 L8.5 12 L12.4 8.5 Z" fill="#f7a41d"/><path d="M8.5 4.2 L11.6 5.6 V9 C11.6 11 10 12.4 8.5 13 C7 12.4 5.4 11 5.4 9 V5.6 Z" fill="#ffffff" stroke="#d0d0d0" stroke-width=".5"/><rect x="7.2" y="8" width="2.6" height="2.4" fill="#e8442c"/><path d="M7.7 8 V7.2 A0.8 0.8 0 0 1 9.3 7.2 V8" stroke="#e8442c" stroke-width=".6" fill="none"/></svg>
<svg style="left:403.20px;top:554.10px;" width="17" height="17" viewBox="0 0 17 17"><rect x="0.6" y="0.6" width="15.8" height="15.8" rx="1.6" fill="#2a8fdf"/><rect x="2.6" y="2.6" width="11.8" height="11.8" fill="#12486e"/><path d="M7 4.4 H4.8 V12.6 H7 M10 4.4 H12.2 V12.6 H10" fill="none" stroke="#ffffff" stroke-width="1.5"/></svg>
<svg style="left:436.50px;top:554.10px;" width="17" height="17" viewBox="0 0 17 17"><circle cx="9.6" cy="8.5" r="7.4" fill="#e86a4a"/><path d="M9.6 1.1 A7.4 7.4 0 0 1 17 8.5 H9.6 Z" fill="#f59a7a"/><path d="M9.6 15.9 A7.4 7.4 0 0 0 17 8.5 H9.6 Z" fill="#c8412b"/><rect x="0.6" y="4.4" width="8.6" height="8.6" rx="0.8" fill="#c8412b"/></svg>
<span class="t s" id="t83" style="left:439.70px;top:558.40px;font-size:6.2px;line-height:9px;color:#ffffff;font-weight:bold;">P</span>
<svg style="left:854.50px;top:558.50px;" width="10" height="8" viewBox="0 0 10 8"><path d="M0.8 6.6 L5 2 L9.2 6.6" fill="none" stroke="#ffffff" stroke-width="1"/></svg>
<svg style="left:869.50px;top:558.50px;" width="12" height="8" viewBox="0 0 12 8"><rect x="2.4" y="1.6" width="9" height="5" fill="none" stroke="#ffffff" stroke-width=".9"/><rect x="3.4" y="2.6" width="7" height="3" fill="#ffffff"/><path d="M0.6 0.4 V4 M0 1.6 H2 M1.6 0.4 V1.6" stroke="#ffffff" stroke-width=".7"/><rect x="11.4" y="3" width="0.6" height="2.2" fill="#fff"/></svg>
<svg style="left:887.50px;top:557.50px;" width="10" height="10" viewBox="0 0 10 10"><path d="M1.4 8.8 A7.4 7.4 0 0 1 8.8 1.4" fill="none" stroke="#8fa8b0" stroke-width=".9"/><path d="M3.6 8.8 A5.2 5.2 0 0 1 8.8 3.6" fill="none" stroke="#ffffff" stroke-width=".9"/><path d="M5.8 8.8 A3 3 0 0 1 8.8 5.8" fill="none" stroke="#ffffff" stroke-width=".9"/><circle cx="8.2" cy="8.4" r=".9" fill="#ffffff"/></svg>
<svg style="left:901.50px;top:557.50px;" width="12" height="10" viewBox="0 0 12 10"><path d="M0.6 3.6 H2.6 L5 1.2 V8.8 L2.6 6.4 H0.6 Z" fill="none" stroke="#ffffff" stroke-width=".8"/><path d="M6.6 3.6 C7.4 4.4 7.4 5.6 6.6 6.4" fill="none" stroke="#ffffff" stroke-width=".8"/><path d="M8.2 2.4 C9.6 4 9.6 6 8.2 7.6" fill="none" stroke="#b8c8cc" stroke-width=".8"/><path d="M9.8 1.2 C11.8 3.6 11.8 6.4 9.8 8.8" fill="none" stroke="#7f979d" stroke-width=".8"/></svg>
<span class="t s" id="t84" style="left:920.00px;top:557.90px;font-size:7.6px;line-height:11px;color:#ffffff;letter-spacing:0.032px">NLD</span>
<span class="t s" id="t85" style="left:956.60px;top:551.30px;font-size:7.6px;line-height:11px;color:#ffffff;letter-spacing:-0.045px">9:41</span>
<span class="t s" id="t86" style="left:946.50px;top:563.30px;font-size:7.6px;line-height:11px;color:#ffffff;letter-spacing:0.223px">7/05/2020</span>
<svg style="left:996.00px;top:557.50px;" width="14" height="12" viewBox="0 0 14 12"><path d="M0.8 0.8 H12 V9 H4 L0.8 11.4 Z" fill="#ffffff"/><path d="M2.6 3 H10.2 M2.6 4.8 H10.2 M2.6 6.6 H8" stroke="#10343f" stroke-width=".7"/></svg>
<div style="left:1001.6px;top:562px;width:11.6px;height:11.6px;border-radius:50%;background:#1f6f9c;box-sizing:border-box;border:1px solid #10343f"></div>
<span class="t s" id="t87" style="left:1005.30px;top:563.00px;font-size:7px;line-height:10px;color:#ffffff;font-weight:bold;">7</span>
</div></body></html>
